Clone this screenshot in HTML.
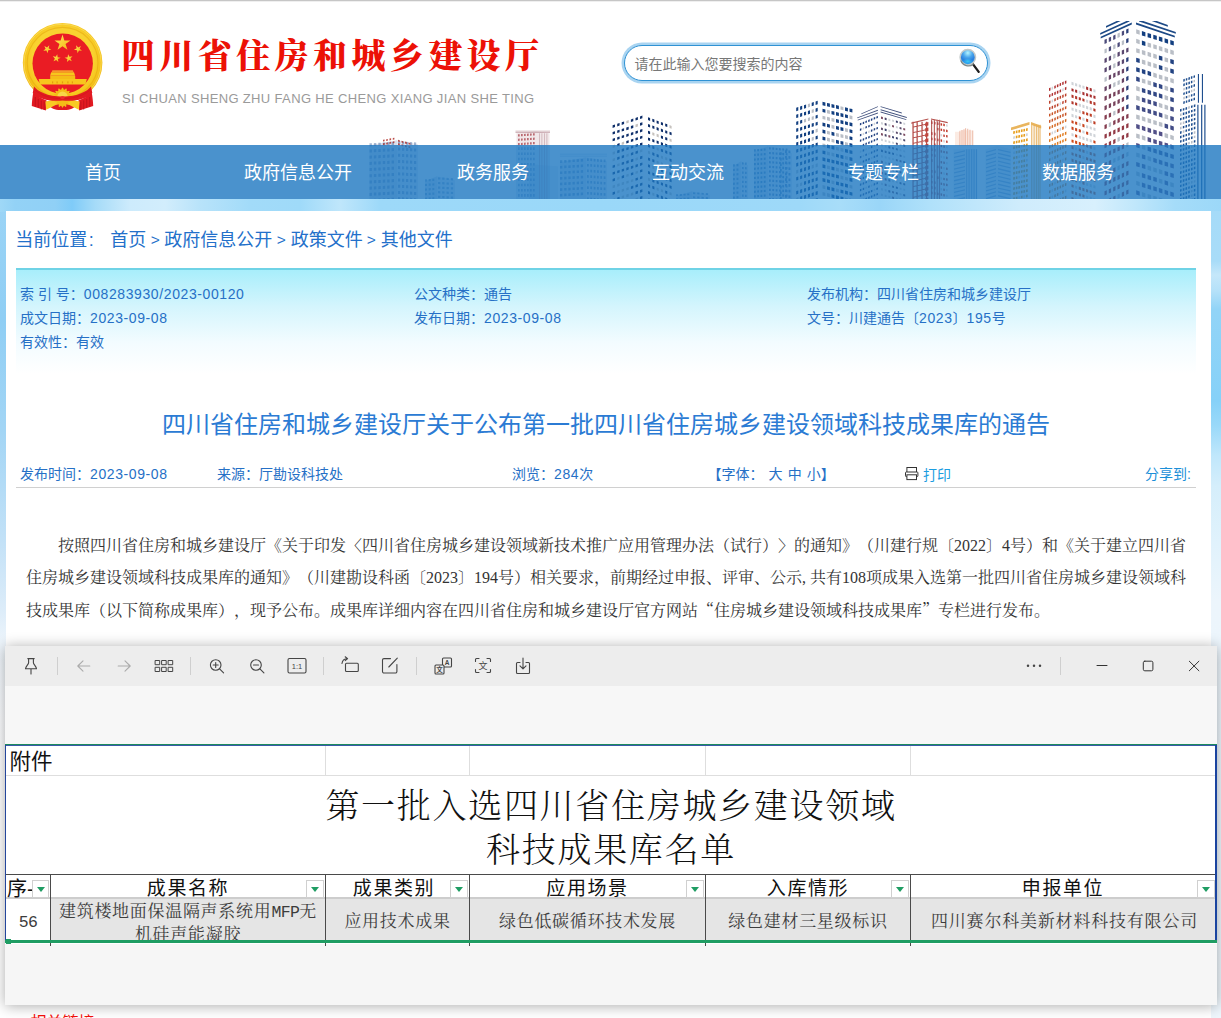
<!DOCTYPE html>
<html lang="zh-CN">
<head>
<meta charset="utf-8">
<title>四川省住房和城乡建设厅</title>
<style>
*{box-sizing:border-box;margin:0;padding:0}
html,body{width:1221px;height:1018px;overflow:hidden;background:#fff}
body{position:relative;font-family:"Liberation Sans","Noto Sans CJK SC",sans-serif;color:#333}
.abs{position:absolute}
#topline{left:0;top:0;width:1221px;height:2px;background:linear-gradient(180deg,#c6c6c6 0,#c6c6c6 1px,#efefef 1px,#efefef 2px)}
#sky{left:0;top:199px;width:1221px;height:820px;background:linear-gradient(180deg,#9bd4f6 0,#8fcef4 120px,#a2d5f5 230px,#c2e1f7 340px,#dcecf9 410px,#eef5fb 447px,#fbfcfe 520px,#fff 600px)}
#skytop{left:0;top:199px;width:1221px;height:13px;background:linear-gradient(90deg,#9fd8f7 0,#93d2f6 15px,#90d0f6 55px,#7fcbf8 72px,#a5dbf8 95px,#cdebfc 130px,#d2edfc 165px,#b8e3fa 200px,#a2dbf9 250px,#9fdaf9 300px,#bfe6fb 340px,#9dd9f9 380px,#9ad8f9 600px,#9ed9f9 800px,#a8ddf9 840px,#9ad6f8 880px,#b0e1fa 930px,#cfecfc 1020px,#d8f0fd 1095px,#c0e7fb 1135px,#a5dcf9 1175px,#9cd8f8 1221px)}
#skyr{left:1211px;top:211px;width:10px;height:807px;background:linear-gradient(180deg,#a5dbf8 0,#a8dcf8 50px,#c5e7fa 64px,#b5e1f9 80px,#92d4f7 98px,#86d1f8 190px,#9ad9f9 215px,#c0e7fb 245px,#d5eefb 275px,#e0f2fc 330px,#ecf5fc 390px,#eef6fc 807px)}
#nav{left:0;top:145px;width:1221px;height:54px;background:rgba(29,119,193,.8)}
#nav span{position:absolute;top:0;height:54px;line-height:56px;color:#fff;font-size:18px;white-space:nowrap;}
#main{left:6px;top:211px;width:1205px;height:820px;background:#fff}
#title1{left:121px;top:32.5px;font-family:"Liberation Serif","Noto Serif CJK SC",serif;font-weight:900;font-size:34px;color:#ec1106;letter-spacing:4.4px;white-space:nowrap;line-height:48px}
#title2{left:122px;top:90.3px;font-size:13px;color:#9a9a9a;white-space:nowrap;line-height:18px;letter-spacing:0.35px}
#search{left:624px;top:45px;width:364px;height:36px;border:1px solid #2f92d4;border-radius:18px;background:#fff;box-shadow:0 0 0 2.5px #a9d4f1}
#search span{position:absolute;left:9.5px;top:1px;line-height:35px;font-size:14px;color:#777}
#crumb{left:15.2px;top:225.5px;font-size:18px;line-height:28px;color:#2370ca;white-space:nowrap}
#crumb span{position:absolute;top:0}
#info{left:16px;top:268px;width:1180px;height:106px;background:linear-gradient(180deg,#a8eefb 0%,#d4f5fd 35%,#f3fcff 70%,#ffffff 100%);border-top:2px solid #6fd3e6}
.meta{font-size:14px;line-height:20px;color:#2670c6;white-space:nowrap}
.mo{font-weight:inherit;font-family:"Liberation Mono",monospace;letter-spacing:-.6px;font-size:16.5px}
.q{font-weight:inherit;font-family:"Noto Serif CJK SC",serif}
.meta i{font-style:normal;letter-spacing:.6px}
#h1{left:6px;top:407px;width:1200px;text-align:center;font-size:24px;line-height:36px;color:#2b7bd4;white-space:nowrap;}
#hr{left:16px;top:487px;width:1180px;height:1px;background:#d0d0d0}
.p{text-spacing-trim:space-all;font-family:"Liberation Serif","Noto Serif CJK SC",serif;font-size:16px;line-height:32px;color:#333;white-space:nowrap}
#win{left:5px;top:645.5px;width:1212px;height:359px;background:#f6f6f6;box-shadow:0 1px 13px rgba(0,0,0,.33)}
#tb{left:0;top:.5px;width:1212px;height:41.5px;background:#ededed}
#tb2{left:0;top:41px;width:1212px;height:59px;background:#f7f7f7}
#sheet{left:0;top:99px;width:1212px;height:200px;background:#fff}
#grayrow{left:46px;top:254px;width:1165px;height:42px;background:#e5e5e5}
#bot{left:30.5px;top:1013px;font-size:16px;color:#f5100a;line-height:20px;white-space:nowrap}

#win .i{position:absolute;overflow:visible}
#win svg{position:absolute;overflow:visible}
.sep{position:absolute;top:12px;width:1px;height:18px;background:#cfcfcf}
.gl{position:absolute;background:#dedede}
.dl{position:absolute;background:#4a4a4a}
.hd{position:absolute;top:233px;height:22px;line-height:22px;font-family:"Liberation Sans","Noto Sans CJK SC",sans-serif;font-weight:400;font-size:19px;letter-spacing:1.6px;color:#111;text-align:center;white-space:nowrap}
.dt{position:absolute;font-family:"Liberation Serif","Noto Serif CJK SC",serif;font-size:17px;letter-spacing:.7px;color:#3c3c3c;text-align:center;white-space:nowrap;line-height:22px}
.fb{position:absolute;top:235px;width:18px;height:18px;background:#fff;border:1px solid #d0d0d0}
.fb:after{content:"";position:absolute;left:4px;top:6px;border-left:4.5px solid transparent;border-right:4.5px solid transparent;border-top:5px solid #1f9d63}
.big{position:absolute;left:0;width:1212px;text-align:center;font-family:"Liberation Serif","Noto Serif CJK SC",serif;font-weight:300;font-size:34px;letter-spacing:1.7px;color:#111;white-space:nowrap;line-height:44px}
</style>
</head>
<body>
<div class="abs" id="topline"></div>
<div class="abs" id="sky"></div>
<div class="abs" id="skytop"></div>
<div class="abs" id="skyr"></div>
<!--EMB-START-->
<svg class="abs" id="emblem" style="left:0;top:0" width="125" height="125" viewBox="0 0 125 125">
<defs>
<radialGradient id="gg" cx="50%" cy="45%" r="55%"><stop offset="0.70" stop-color="#f9d230"/><stop offset="0.86" stop-color="#f6c51c"/><stop offset="1" stop-color="#eeb313"/></radialGradient>
<linearGradient id="sg" x1="0" y1="0" x2="1" y2="1"><stop offset="0" stop-color="#ffe75a"/><stop offset="1" stop-color="#f3b714"/></linearGradient>
<clipPath id="ct"><rect x="40" y="80" width="45" height="16.800"/></clipPath>
<clipPath id="cb"><rect x="40" y="100" width="45" height="12"/></clipPath>
</defs>
<circle cx="62.6" cy="62.8" r="39.8" fill="url(#gg)"/>
<circle cx="62.6" cy="62.8" r="35.4" fill="none" stroke="#e3a50f" stroke-width="1.1" opacity=".55"/>
<circle cx="62.6" cy="62.8" r="38.6" fill="none" stroke="#fbe06a" stroke-width="1" opacity=".7"/>
<circle cx="62.7" cy="63.6" r="30.2" fill="#ea1c24"/>
<g fill="url(#sg)">
<polygon points="62.50,34.60 64.39,40.40 70.49,40.40 65.55,43.99 67.44,49.80 62.50,46.21 57.56,49.80 59.45,43.99 54.51,40.40 60.61,40.40"/>
<polygon points="49.30,45.36 48.67,48.35 51.31,49.87 48.27,50.19 47.64,53.18 46.40,50.39 43.36,50.71 45.63,48.67 44.39,45.88 47.03,47.40"/>
<polygon points="76.00,45.36 78.27,47.40 80.91,45.88 79.67,48.67 81.94,50.71 78.90,50.39 77.66,53.18 77.03,50.19 73.99,49.87 76.63,48.35"/>
<polygon points="57.23,54.16 57.65,57.19 60.66,57.72 57.92,59.05 58.34,62.07 56.22,59.88 53.48,61.22 54.91,58.52 52.79,56.33 55.80,56.86"/>
<polygon points="68.07,54.16 69.50,56.86 72.51,56.33 70.39,58.52 71.82,61.22 69.08,59.88 66.96,62.07 67.38,59.05 64.64,57.72 67.65,57.19"/>
</g>
<g fill="#f7c61d">
<path d="M52.4 70.2h20.4l.7 1.8h-21.8z" fill="#f59a2a"/>
<path d="M51.2 72.2h22.8l1.2 3.6h-25.2z"/>
<path d="M50.2 76.0h25v3.4h-25z" fill="#f4bd17"/>
<path d="M38.6 79.0h48.2l-1.400 5.600h-45.400z"/>
</g>
<g fill="#e49a10"><rect x="52" y="81.4" width="1.2" height="2"/><rect x="56.5" y="81.4" width="1.2" height="2"/><rect x="61.9" y="81.4" width="1.2" height="2"/><rect x="67.3" y="81.4" width="1.2" height="2"/><rect x="71.8" y="81.4" width="1.2" height="2"/></g>
<!-- gear top half -->
<g fill="#f4bd17" clip-path="url(#ct)"><polygon points="62.00,87.71 63.00,87.71 63.71,89.50 64.49,89.68 65.91,88.38 66.81,88.81 66.67,90.73 67.30,91.23 69.14,90.67 69.76,91.45 68.80,93.12 69.15,93.84 71.05,94.14 71.27,95.11 69.69,96.20 69.69,97.00 71.27,98.09 71.05,99.06 69.15,99.36 68.80,100.08 69.76,101.75 69.14,102.53 67.30,101.97 66.67,102.47 66.81,104.39 65.91,104.82 64.49,103.52 63.71,103.70 63.00,105.49 62.00,105.49 61.29,103.70 60.51,103.52 59.09,104.82 58.19,104.39 58.33,102.47 57.70,101.97 55.86,102.53 55.24,101.75 56.20,100.08 55.85,99.36 53.95,99.06 53.73,98.09 55.31,97.00 55.31,96.20 53.73,95.11 53.95,94.14 55.85,93.84 56.20,93.12 55.24,91.45 55.86,90.67 57.70,91.23 58.33,90.73 58.19,88.81 59.09,88.38 60.51,89.68 61.29,89.50"/></g>
<path d="M57.300 96.800a5.200 5.200 0 0 1 10.400 0z" fill="#f9d648"/>
<!-- hanging drapes -->
<path d="M33.4 92 C32.400 97 31.900 102 31.800 106.000 L45.900 110.500 L46.600 100.500 C42 99 37 96 33.400 92z" fill="#e21a22"/>
<path d="M91.600 92 C92.600 97 93.100 102 93.200 106.000 L79.100 110.500 L78.400 100.500 C83 99 88 96 91.600 92z" fill="#e21a22"/>
<g stroke="#bd1219" stroke-width=".8" fill="none"><path d="M35.300 97v9.800M38.300 99v8.800M41.300 100.500v9M44.200 101.500v8.500M89.700 97v9.800M86.700 99v8.800M83.700 100.500v9M80.800 101.500v8.500"/></g>
<!-- bottom red scallop -->
<path d="M48.500 105 C51 108.500 56 110.600 62.500 110.000 C69 110.600 74 108.500 76.500 105 L70 102 L55 102z" fill="#e21a22"/>
<!-- gold ribbon tails -->
<path d="M55.000 99.800 L45.400 101.500 L46.200 109.700 L58.600 103.400z" fill="#f9ca24"/>
<path d="M70.000 99.800 L79.600 101.500 L78.800 109.700 L66.400 103.400z" fill="#f9ca24"/>
<!-- gear bottom half -->
<g fill="#f4bd17" clip-path="url(#cb)"><polygon points="62.05,91.61 62.95,91.61 63.57,93.29 64.27,93.45 65.56,92.21 66.37,92.60 66.20,94.38 66.76,94.83 68.47,94.27 69.02,94.97 68.10,96.50 68.41,97.15 70.19,97.39 70.39,98.26 68.89,99.24 68.89,99.96 70.39,100.94 70.19,101.81 68.41,102.05 68.10,102.70 69.02,104.23 68.47,104.93 66.76,104.37 66.20,104.82 66.37,106.60 65.56,106.99 64.27,105.75 63.57,105.91 62.95,107.59 62.05,107.59 61.43,105.91 60.73,105.75 59.44,106.99 58.63,106.60 58.80,104.82 58.24,104.37 56.53,104.93 55.98,104.23 56.90,102.70 56.59,102.05 54.81,101.81 54.61,100.94 56.11,99.96 56.11,99.24 54.61,98.26 54.81,97.39 56.59,97.15 56.90,96.50 55.98,94.97 56.53,94.27 58.24,94.83 58.80,94.38 58.63,92.60 59.44,92.21 60.73,93.45 61.43,93.29"/></g>
<!-- red band -->
<path d="M34.000 86.600 C38 91.500 47 96.600 62.500 96.700 C78 96.600 87 91.500 91.000 86.600 L92.300 93.000 C86 99 76 101.800 62.500 100.600 C49 101.800 39 99 32.700 93.000z" fill="#e21a22"/>
<path d="M34.5 89.500 C40 95 50 98.800 62.500 98.600 C75 98.800 85 95 90.500 89.500" stroke="#c9141c" stroke-width=".7" fill="none" opacity=".7"/>
<ellipse cx="62.500" cy="97.600" rx="2.400" ry="1.700" fill="#ee2a2e"/>
</svg>
<!--EMB-END-->
<div class="abs" id="title1">四川省住房和城乡建设厅</div>
<div class="abs" id="title2">SI CHUAN SHENG ZHU FANG HE CHENG XIANG JIAN SHE TING</div>
<div class="abs" id="search"><span>请在此输入您要搜索的内容</span></div>
<svg class="abs" id="sicon" style="left:955px;top:45px" width="30" height="32" viewBox="955 45 30 32">
<defs><radialGradient id="lens" cx="50%" cy="22%" r="75%"><stop offset="0" stop-color="#b4f5ff"/><stop offset=".4" stop-color="#4aa6ec"/><stop offset=".7" stop-color="#2a7fde"/><stop offset="1" stop-color="#2a9ff0"/></radialGradient>
<radialGradient id="lens2" cx="50%" cy="50%" r="50%"><stop offset="0" stop-color="#38d0fa" stop-opacity=".95"/><stop offset="1" stop-color="#38d0fa" stop-opacity="0"/></radialGradient></defs>
<path d="M972.400 63.400l6.300 8.500" stroke="#1e1e1e" stroke-width="2.300" stroke-linecap="round"/>
<circle cx="967.800" cy="57.200" r="7.700" fill="url(#lens)" stroke="#c3c9c9" stroke-width="1.500"/>
<path d="M960.900 60.500a7.700 7.700 0 0 0 12.500 3.400" fill="none" stroke="#7d8888" stroke-width="1.300"/>
<ellipse cx="967.800" cy="61.300" rx="5" ry="2.800" fill="url(#lens2)"/>
</svg>
<!--SKYLINE-START-->
<svg class="abs" id="skyline" width="1221" height="178.3" viewBox="0 20.7 1221 178.3" style="left:0;top:20.7px">
<path fill="#4b4b7a" d="M1104.5 39.5l2.3 -1.1v4.3l-2.3 1.1zM1108.8 37.5l2.3 -1.1v4.3l-2.3 1.1zM1113.2 35.4l2.3 -1.1v4.3l-2.3 1.1zM1121.8 31.3l2.3 -1.1v4.3l-2.3 1.1zM1108.8 46.9l2.3 -1.1v4.3l-2.3 1.1zM1117.5 42.8l2.3 -1.1v4.3l-2.3 1.1z"/>
<path fill="#b9bec6" d="M1117.5 33.4l2.3 -1.1v4.3l-2.3 1.1zM1104.5 49.0l2.3 -1.1v4.3l-2.3 1.1zM1113.2 44.9l2.3 -1.1v4.3l-2.3 1.1zM1121.8 40.8l2.3 -1.1v4.3l-2.3 1.1zM1113.2 54.3l2.3 -1.1v4.3l-2.3 1.1zM1113.2 63.8l2.3 -1.1v4.3l-2.3 1.1zM1104.5 77.4l2.3 -1.1v4.3l-2.3 1.1zM1113.2 82.8l2.3 -1.1v4.3l-2.3 1.1zM1117.5 80.7l2.3 -1.1v4.3l-2.3 1.1zM1113.2 111.2l2.3 -1.1v4.3l-2.3 1.1zM1108.8 122.7l2.3 -1.1v4.3l-2.3 1.1zM1117.5 137.5l2.3 -1.1v4.3l-2.3 1.1zM1126.2 142.9l2.3 -1.1v4.3l-2.3 1.1zM1113.2 158.5l2.3 -1.1v4.3l-2.3 1.1zM1117.5 156.5l2.3 -1.1v4.3l-2.3 1.1zM1126.2 152.4l2.3 -1.1v4.3l-2.3 1.1zM1117.5 165.9l2.3 -1.1v4.3l-2.3 1.1zM1117.5 194.3l2.3 -1.1v4.3l-2.3 1.1zM1136.2 29.0l3.5 1.1v4.3l-3.5 -1.1zM1136.2 38.5l3.5 1.1v4.3l-3.5 -1.1zM1147.6 42.1l3.5 1.1v4.3l-3.5 -1.1zM1153.3 43.9l3.5 1.1v4.3l-3.5 -1.1zM1158.9 45.7l3.5 1.1v4.3l-3.5 -1.1zM1164.6 47.5l3.5 1.1v4.3l-3.5 -1.1zM1170.3 49.3l3.5 1.1v4.3l-3.5 -1.1zM1136.2 47.9l3.5 1.1v4.3l-3.5 -1.1zM1141.9 49.7l3.5 1.1v4.3l-3.5 -1.1zM1147.6 51.5l3.5 1.1v4.3l-3.5 -1.1zM1153.3 53.3l3.5 1.1v4.3l-3.5 -1.1zM1164.6 56.9l3.5 1.1v4.3l-3.5 -1.1zM1141.9 59.2l3.5 1.1v4.3l-3.5 -1.1zM1147.6 61.0l3.5 1.1v4.3l-3.5 -1.1zM1153.3 62.8l3.5 1.1v4.3l-3.5 -1.1zM1164.6 66.4l3.5 1.1v4.3l-3.5 -1.1zM1153.3 72.3l3.5 1.1v4.3l-3.5 -1.1zM1158.9 74.1l3.5 1.1v4.3l-3.5 -1.1zM1164.6 75.9l3.5 1.1v4.3l-3.5 -1.1zM1170.3 77.7l3.5 1.1v4.3l-3.5 -1.1zM1141.9 78.1l3.5 1.1v4.3l-3.5 -1.1zM1147.6 79.9l3.5 1.1v4.3l-3.5 -1.1zM1164.6 85.3l3.5 1.1v4.3l-3.5 -1.1zM1136.2 85.8l3.5 1.1v4.3l-3.5 -1.1zM1164.6 94.8l3.5 1.1v4.3l-3.5 -1.1zM1136.2 95.3l3.5 1.1v4.3l-3.5 -1.1zM1158.9 102.5l3.5 1.1v4.3l-3.5 -1.1zM1164.6 104.3l3.5 1.1v4.3l-3.5 -1.1zM1164.6 113.8l3.5 1.1v4.3l-3.5 -1.1zM1136.2 114.2l3.5 1.1v4.3l-3.5 -1.1zM1141.9 116.0l3.5 1.1v4.3l-3.5 -1.1zM1147.6 117.8l3.5 1.1v4.3l-3.5 -1.1zM1153.3 119.6l3.5 1.1v4.3l-3.5 -1.1zM1158.9 121.4l3.5 1.1v4.3l-3.5 -1.1zM1164.6 132.7l3.5 1.1v4.3l-3.5 -1.1zM1170.3 134.5l3.5 1.1v4.3l-3.5 -1.1zM1136.2 133.2l3.5 1.1v4.3l-3.5 -1.1zM1141.9 135.0l3.5 1.1v4.3l-3.5 -1.1zM1141.9 144.4l3.5 1.1v4.3l-3.5 -1.1zM1136.2 152.1l3.5 1.1v4.3l-3.5 -1.1zM1147.6 155.7l3.5 1.1v4.3l-3.5 -1.1zM1147.6 165.2l3.5 1.1v4.3l-3.5 -1.1zM1153.3 167.0l3.5 1.1v4.3l-3.5 -1.1zM1158.9 168.8l3.5 1.1v4.3l-3.5 -1.1zM1136.2 171.0l3.5 1.1v4.3l-3.5 -1.1zM1158.9 178.2l3.5 1.1v4.3l-3.5 -1.1zM1170.3 181.8l3.5 1.1v4.3l-3.5 -1.1zM1136.2 180.5l3.5 1.1v4.3l-3.5 -1.1zM1141.9 191.8l3.5 1.1v4.3l-3.5 -1.1zM1147.6 193.6l3.5 1.1v4.3l-3.5 -1.1zM1153.3 195.4l3.5 1.1v4.3l-3.5 -1.1zM1158.9 197.2l3.5 1.1v4.3l-3.5 -1.1zM1170.3 200.8l3.5 1.1v4.3l-3.5 -1.1zM1193.5 79.9l1.5 -0.5v2.4l-1.5 0.5zM1183.3 87.9l1.5 -0.5v2.4l-1.5 0.5zM1190.9 89.7l1.5 -0.5v2.4l-1.5 0.5zM1193.5 88.8l1.5 -0.5v2.4l-1.5 0.5zM1183.3 96.8l1.5 -0.5v2.4l-1.5 0.5zM1188.4 95.0l1.5 -0.5v2.4l-1.5 0.5zM1188.2 106.3l1.6 -0.5v2.4l-1.6 0.5zM1180.0 113.5l1.6 -0.5v2.4l-1.6 0.5zM1180.0 122.4l1.6 -0.5v2.4l-1.6 0.5zM1182.8 121.5l1.6 -0.5v2.4l-1.6 0.5zM1180.0 126.8l1.6 -0.5v2.4l-1.6 0.5zM1182.8 130.3l1.6 -0.5v2.4l-1.6 0.5zM1193.8 131.2l1.6 -0.5v2.4l-1.6 0.5zM1193.8 135.6l1.6 -0.5v2.4l-1.6 0.5zM1188.2 141.9l1.6 -0.5v2.4l-1.6 0.5zM1191.0 141.0l1.6 -0.5v2.4l-1.6 0.5zM1191.0 145.4l1.6 -0.5v2.4l-1.6 0.5zM1191.0 154.3l1.6 -0.5v2.4l-1.6 0.5zM1180.0 166.8l1.6 -0.5v2.4l-1.6 0.5zM1193.8 175.7l1.6 -0.5v2.4l-1.6 0.5zM1188.2 181.9l1.6 -0.5v2.4l-1.6 0.5zM1191.0 181.0l1.6 -0.5v2.4l-1.6 0.5zM1193.8 180.1l1.6 -0.5v2.4l-1.6 0.5zM1191.0 189.9l1.6 -0.5v2.4l-1.6 0.5zM1191.0 194.4l1.6 -0.5v2.4l-1.6 0.5zM1185.5 200.6l1.6 -0.5v2.4l-1.6 0.5zM807.9 103.8l2.1 -0.7v3.4l-2.1 0.7zM811.7 109.4l2.1 -0.7v3.4l-2.1 0.7zM804.0 118.9l2.1 -0.7v3.4l-2.1 0.7zM807.9 117.6l2.1 -0.7v3.4l-2.1 0.7zM811.7 116.4l2.1 -0.7v3.4l-2.1 0.7zM815.6 129.0l2.1 -0.7v3.4l-2.1 0.7zM811.7 137.2l2.1 -0.7v3.4l-2.1 0.7zM796.2 170.0l2.1 -0.7v3.4l-2.1 0.7zM811.7 165.0l2.1 -0.7v3.4l-2.1 0.7zM815.6 163.7l2.1 -0.7v3.4l-2.1 0.7zM796.2 183.8l2.1 -0.7v3.4l-2.1 0.7zM800.1 182.6l2.1 -0.7v3.4l-2.1 0.7zM796.2 197.7l2.1 -0.7v3.4l-2.1 0.7zM840.5 105.9l2.9 0.7v3.4l-2.9 -0.7zM827.0 109.5l2.9 0.7v3.4l-2.9 -0.7zM849.5 115.0l2.9 0.7v3.4l-2.9 -0.7zM822.5 115.4l2.9 0.7v3.4l-2.9 -0.7zM827.0 116.5l2.9 0.7v3.4l-2.9 -0.7zM831.5 117.6l2.9 0.7v3.4l-2.9 -0.7zM831.5 124.5l2.9 0.7v3.4l-2.9 -0.7zM845.0 127.8l2.9 0.7v3.4l-2.9 -0.7zM827.0 130.4l2.9 0.7v3.4l-2.9 -0.7zM836.0 132.6l2.9 0.7v3.4l-2.9 -0.7zM840.5 133.7l2.9 0.7v3.4l-2.9 -0.7zM845.0 134.8l2.9 0.7v3.4l-2.9 -0.7zM827.0 137.3l2.9 0.7v3.4l-2.9 -0.7zM831.5 138.4l2.9 0.7v3.4l-2.9 -0.7zM845.0 141.7l2.9 0.7v3.4l-2.9 -0.7zM822.5 143.1l2.9 0.7v3.4l-2.9 -0.7zM836.0 146.4l2.9 0.7v3.4l-2.9 -0.7zM840.5 147.5l2.9 0.7v3.4l-2.9 -0.7zM827.0 151.2l2.9 0.7v3.4l-2.9 -0.7zM831.5 152.3l2.9 0.7v3.4l-2.9 -0.7zM845.0 155.6l2.9 0.7v3.4l-2.9 -0.7zM827.0 165.1l2.9 0.7v3.4l-2.9 -0.7zM836.0 167.3l2.9 0.7v3.4l-2.9 -0.7zM840.5 168.4l2.9 0.7v3.4l-2.9 -0.7zM840.5 175.3l2.9 0.7v3.4l-2.9 -0.7zM845.0 176.4l2.9 0.7v3.4l-2.9 -0.7zM831.5 180.0l2.9 0.7v3.4l-2.9 -0.7zM849.5 184.4l2.9 0.7v3.4l-2.9 -0.7zM822.5 184.8l2.9 0.7v3.4l-2.9 -0.7zM836.0 188.1l2.9 0.7v3.4l-2.9 -0.7zM822.5 191.7l2.9 0.7v3.4l-2.9 -0.7zM827.0 192.8l2.9 0.7v3.4l-2.9 -0.7zM845.0 197.2l2.9 0.7v3.4l-2.9 -0.7zM840.5 203.1l2.9 0.7v3.4l-2.9 -0.7zM849.5 205.3l2.9 0.7v3.4l-2.9 -0.7z"/>
<path fill="#2a3f7a" d="M1126.2 29.2l2.3 -1.1v4.3l-2.3 1.1zM1126.2 38.7l2.3 -1.1v4.3l-2.3 1.1zM1126.2 57.7l2.3 -1.1v4.3l-2.3 1.1zM1126.2 67.1l2.3 -1.1v4.3l-2.3 1.1zM1126.2 76.6l2.3 -1.1v4.3l-2.3 1.1zM1126.2 86.1l2.3 -1.1v4.3l-2.3 1.1zM1126.2 95.5l2.3 -1.1v4.3l-2.3 1.1zM1126.2 105.0l2.3 -1.1v4.3l-2.3 1.1z"/>
<path fill="#59476f" d="M1104.5 58.4l2.3 -1.1v4.3l-2.3 1.1zM1108.8 56.4l2.3 -1.1v4.3l-2.3 1.1zM1117.5 52.3l2.3 -1.1v4.3l-2.3 1.1zM1121.8 50.2l2.3 -1.1v4.3l-2.3 1.1zM1126.2 48.2l2.3 -1.1v4.3l-2.3 1.1zM1104.5 67.9l2.3 -1.1v4.3l-2.3 1.1zM1108.8 65.9l2.3 -1.1v4.3l-2.3 1.1zM1117.5 61.8l2.3 -1.1v4.3l-2.3 1.1zM1121.8 59.7l2.3 -1.1v4.3l-2.3 1.1z"/>
<path fill="#674465" d="M1108.8 75.3l2.3 -1.1v4.3l-2.3 1.1zM1113.2 73.3l2.3 -1.1v4.3l-2.3 1.1zM1117.5 71.2l2.3 -1.1v4.3l-2.3 1.1zM1121.8 69.2l2.3 -1.1v4.3l-2.3 1.1zM1104.5 86.8l2.3 -1.1v4.3l-2.3 1.1zM1108.8 84.8l2.3 -1.1v4.3l-2.3 1.1zM1121.8 78.6l2.3 -1.1v4.3l-2.3 1.1z"/>
<path fill="#76405a" d="M1104.5 96.3l2.3 -1.1v4.3l-2.3 1.1zM1108.8 94.3l2.3 -1.1v4.3l-2.3 1.1zM1113.2 92.2l2.3 -1.1v4.3l-2.3 1.1zM1117.5 90.2l2.3 -1.1v4.3l-2.3 1.1zM1121.8 88.1l2.3 -1.1v4.3l-2.3 1.1zM1104.5 105.8l2.3 -1.1v4.3l-2.3 1.1zM1108.8 103.7l2.3 -1.1v4.3l-2.3 1.1zM1113.2 101.7l2.3 -1.1v4.3l-2.3 1.1zM1117.5 99.6l2.3 -1.1v4.3l-2.3 1.1zM1121.8 97.6l2.3 -1.1v4.3l-2.3 1.1z"/>
<path fill="#843c4f" d="M1104.5 115.3l2.3 -1.1v4.3l-2.3 1.1zM1108.8 113.2l2.3 -1.1v4.3l-2.3 1.1zM1117.5 109.1l2.3 -1.1v4.3l-2.3 1.1zM1121.8 107.1l2.3 -1.1v4.3l-2.3 1.1zM1104.5 124.7l2.3 -1.1v4.3l-2.3 1.1zM1113.2 120.6l2.3 -1.1v4.3l-2.3 1.1zM1117.5 118.6l2.3 -1.1v4.3l-2.3 1.1zM1121.8 116.5l2.3 -1.1v4.3l-2.3 1.1zM1126.2 114.5l2.3 -1.1v4.3l-2.3 1.1z"/>
<path fill="#923945" d="M1104.5 134.2l2.3 -1.1v4.3l-2.3 1.1zM1108.8 132.1l2.3 -1.1v4.3l-2.3 1.1zM1113.2 130.1l2.3 -1.1v4.3l-2.3 1.1zM1117.5 128.0l2.3 -1.1v4.3l-2.3 1.1zM1121.8 126.0l2.3 -1.1v4.3l-2.3 1.1zM1126.2 123.9l2.3 -1.1v4.3l-2.3 1.1zM1104.5 143.7l2.3 -1.1v4.3l-2.3 1.1zM1108.8 141.6l2.3 -1.1v4.3l-2.3 1.1zM1113.2 139.6l2.3 -1.1v4.3l-2.3 1.1zM1121.8 135.5l2.3 -1.1v4.3l-2.3 1.1zM1126.2 133.4l2.3 -1.1v4.3l-2.3 1.1z"/>
<path fill="#a0353a" d="M1104.5 153.1l2.3 -1.1v4.3l-2.3 1.1zM1108.8 151.1l2.3 -1.1v4.3l-2.3 1.1zM1113.2 149.0l2.3 -1.1v4.3l-2.3 1.1zM1117.5 147.0l2.3 -1.1v4.3l-2.3 1.1zM1121.8 144.9l2.3 -1.1v4.3l-2.3 1.1zM1104.5 162.6l2.3 -1.1v4.3l-2.3 1.1zM1108.8 160.6l2.3 -1.1v4.3l-2.3 1.1zM1121.8 154.4l2.3 -1.1v4.3l-2.3 1.1zM1104.5 172.1l2.3 -1.1v4.3l-2.3 1.1zM1108.8 170.0l2.3 -1.1v4.3l-2.3 1.1zM1113.2 168.0l2.3 -1.1v4.3l-2.3 1.1zM1121.8 163.9l2.3 -1.1v4.3l-2.3 1.1zM1126.2 161.8l2.3 -1.1v4.3l-2.3 1.1zM1104.5 181.5l2.3 -1.1v4.3l-2.3 1.1zM1108.8 179.5l2.3 -1.1v4.3l-2.3 1.1zM1113.2 177.4l2.3 -1.1v4.3l-2.3 1.1zM1117.5 175.4l2.3 -1.1v4.3l-2.3 1.1zM1121.8 173.3l2.3 -1.1v4.3l-2.3 1.1zM1126.2 171.3l2.3 -1.1v4.3l-2.3 1.1zM1104.5 191.0l2.3 -1.1v4.3l-2.3 1.1zM1108.8 189.0l2.3 -1.1v4.3l-2.3 1.1zM1113.2 186.9l2.3 -1.1v4.3l-2.3 1.1zM1117.5 184.9l2.3 -1.1v4.3l-2.3 1.1zM1121.8 182.8l2.3 -1.1v4.3l-2.3 1.1zM1126.2 180.8l2.3 -1.1v4.3l-2.3 1.1zM1104.5 200.5l2.3 -1.1v4.3l-2.3 1.1zM1108.8 198.4l2.3 -1.1v4.3l-2.3 1.1zM1113.2 196.4l2.3 -1.1v4.3l-2.3 1.1zM1121.8 192.3l2.3 -1.1v4.3l-2.3 1.1zM1126.2 190.2l2.3 -1.1v4.3l-2.3 1.1zM1104.5 210.0l2.3 -1.1v4.3l-2.3 1.1zM1108.8 207.9l2.3 -1.1v4.3l-2.3 1.1zM1113.2 205.9l2.3 -1.1v4.3l-2.3 1.1zM1117.5 203.8l2.3 -1.1v4.3l-2.3 1.1zM1121.8 201.8l2.3 -1.1v4.3l-2.3 1.1zM1126.2 199.7l2.3 -1.1v4.3l-2.3 1.1z"/>
<path fill="#123f80" d="M1141.9 30.8l3.5 1.1v4.3l-3.5 -1.1zM1147.6 32.6l3.5 1.1v4.3l-3.5 -1.1zM1153.3 34.4l3.5 1.1v4.3l-3.5 -1.1zM1158.9 36.2l3.5 1.1v4.3l-3.5 -1.1zM1164.6 38.0l3.5 1.1v4.3l-3.5 -1.1zM1170.3 39.8l3.5 1.1v4.3l-3.5 -1.1zM1141.9 40.3l3.5 1.1v4.3l-3.5 -1.1zM796.2 107.5l2.1 -0.7v3.4l-2.1 0.7zM800.1 106.2l2.1 -0.7v3.4l-2.1 0.7zM804.0 105.0l2.1 -0.7v3.4l-2.1 0.7zM811.7 102.5l2.1 -0.7v3.4l-2.1 0.7zM815.6 101.2l2.1 -0.7v3.4l-2.1 0.7zM796.2 114.4l2.1 -0.7v3.4l-2.1 0.7zM800.1 113.2l2.1 -0.7v3.4l-2.1 0.7zM804.0 111.9l2.1 -0.7v3.4l-2.1 0.7zM807.9 110.7l2.1 -0.7v3.4l-2.1 0.7zM815.6 108.2l2.1 -0.7v3.4l-2.1 0.7zM796.2 121.4l2.1 -0.7v3.4l-2.1 0.7zM800.1 120.1l2.1 -0.7v3.4l-2.1 0.7zM815.6 115.1l2.1 -0.7v3.4l-2.1 0.7zM796.2 128.3l2.1 -0.7v3.4l-2.1 0.7zM800.1 127.1l2.1 -0.7v3.4l-2.1 0.7zM804.0 125.8l2.1 -0.7v3.4l-2.1 0.7zM807.9 124.6l2.1 -0.7v3.4l-2.1 0.7zM811.7 123.3l2.1 -0.7v3.4l-2.1 0.7zM815.6 122.1l2.1 -0.7v3.4l-2.1 0.7zM796.2 135.3l2.1 -0.7v3.4l-2.1 0.7zM800.1 134.0l2.1 -0.7v3.4l-2.1 0.7zM804.0 132.8l2.1 -0.7v3.4l-2.1 0.7zM807.9 131.5l2.1 -0.7v3.4l-2.1 0.7zM811.7 130.3l2.1 -0.7v3.4l-2.1 0.7zM796.2 142.2l2.1 -0.7v3.4l-2.1 0.7zM800.1 140.9l2.1 -0.7v3.4l-2.1 0.7zM804.0 139.7l2.1 -0.7v3.4l-2.1 0.7zM807.9 138.4l2.1 -0.7v3.4l-2.1 0.7zM815.6 135.9l2.1 -0.7v3.4l-2.1 0.7zM796.2 149.1l2.1 -0.7v3.4l-2.1 0.7zM800.1 147.9l2.1 -0.7v3.4l-2.1 0.7zM804.0 146.6l2.1 -0.7v3.4l-2.1 0.7zM807.9 145.4l2.1 -0.7v3.4l-2.1 0.7zM811.7 144.1l2.1 -0.7v3.4l-2.1 0.7zM815.6 142.9l2.1 -0.7v3.4l-2.1 0.7zM796.2 156.1l2.1 -0.7v3.4l-2.1 0.7zM800.1 154.8l2.1 -0.7v3.4l-2.1 0.7zM804.0 153.6l2.1 -0.7v3.4l-2.1 0.7zM807.9 152.3l2.1 -0.7v3.4l-2.1 0.7zM811.7 151.1l2.1 -0.7v3.4l-2.1 0.7zM815.6 149.8l2.1 -0.7v3.4l-2.1 0.7zM796.2 163.0l2.1 -0.7v3.4l-2.1 0.7zM800.1 161.8l2.1 -0.7v3.4l-2.1 0.7zM804.0 160.5l2.1 -0.7v3.4l-2.1 0.7zM807.9 159.3l2.1 -0.7v3.4l-2.1 0.7zM811.7 158.0l2.1 -0.7v3.4l-2.1 0.7zM815.6 156.8l2.1 -0.7v3.4l-2.1 0.7zM800.1 168.7l2.1 -0.7v3.4l-2.1 0.7zM804.0 167.5l2.1 -0.7v3.4l-2.1 0.7zM807.9 166.2l2.1 -0.7v3.4l-2.1 0.7zM796.2 176.9l2.1 -0.7v3.4l-2.1 0.7zM800.1 175.6l2.1 -0.7v3.4l-2.1 0.7zM804.0 174.4l2.1 -0.7v3.4l-2.1 0.7zM807.9 173.1l2.1 -0.7v3.4l-2.1 0.7zM811.7 171.9l2.1 -0.7v3.4l-2.1 0.7zM815.6 170.6l2.1 -0.7v3.4l-2.1 0.7zM804.0 181.3l2.1 -0.7v3.4l-2.1 0.7zM807.9 180.1l2.1 -0.7v3.4l-2.1 0.7zM811.7 178.8l2.1 -0.7v3.4l-2.1 0.7zM815.6 177.6l2.1 -0.7v3.4l-2.1 0.7zM796.2 190.8l2.1 -0.7v3.4l-2.1 0.7zM800.1 189.5l2.1 -0.7v3.4l-2.1 0.7zM804.0 188.3l2.1 -0.7v3.4l-2.1 0.7zM807.9 187.0l2.1 -0.7v3.4l-2.1 0.7zM811.7 185.8l2.1 -0.7v3.4l-2.1 0.7zM815.6 184.5l2.1 -0.7v3.4l-2.1 0.7zM800.1 196.5l2.1 -0.7v3.4l-2.1 0.7zM804.0 195.2l2.1 -0.7v3.4l-2.1 0.7zM807.9 194.0l2.1 -0.7v3.4l-2.1 0.7zM811.7 192.7l2.1 -0.7v3.4l-2.1 0.7zM815.6 191.5l2.1 -0.7v3.4l-2.1 0.7zM796.2 204.7l2.1 -0.7v3.4l-2.1 0.7zM800.1 203.4l2.1 -0.7v3.4l-2.1 0.7zM804.0 202.2l2.1 -0.7v3.4l-2.1 0.7zM807.9 200.9l2.1 -0.7v3.4l-2.1 0.7zM811.7 199.7l2.1 -0.7v3.4l-2.1 0.7zM815.6 198.4l2.1 -0.7v3.4l-2.1 0.7zM822.5 101.5l2.9 0.7v3.4l-2.9 -0.7zM827.0 102.6l2.9 0.7v3.4l-2.9 -0.7zM831.5 103.7l2.9 0.7v3.4l-2.9 -0.7zM836.0 104.8l2.9 0.7v3.4l-2.9 -0.7zM845.0 107.0l2.9 0.7v3.4l-2.9 -0.7zM849.5 108.1l2.9 0.7v3.4l-2.9 -0.7zM822.5 108.4l2.9 0.7v3.4l-2.9 -0.7zM831.5 110.6l2.9 0.7v3.4l-2.9 -0.7zM836.0 111.7l2.9 0.7v3.4l-2.9 -0.7zM840.5 112.8l2.9 0.7v3.4l-2.9 -0.7zM845.0 113.9l2.9 0.7v3.4l-2.9 -0.7zM836.0 118.7l2.9 0.7v3.4l-2.9 -0.7zM840.5 119.8l2.9 0.7v3.4l-2.9 -0.7zM845.0 120.9l2.9 0.7v3.4l-2.9 -0.7zM849.5 122.0l2.9 0.7v3.4l-2.9 -0.7zM822.5 122.3l2.9 0.7v3.4l-2.9 -0.7zM827.0 123.4l2.9 0.7v3.4l-2.9 -0.7zM836.0 125.6l2.9 0.7v3.4l-2.9 -0.7zM840.5 126.7l2.9 0.7v3.4l-2.9 -0.7zM849.5 128.9l2.9 0.7v3.4l-2.9 -0.7zM822.5 129.3l2.9 0.7v3.4l-2.9 -0.7zM831.5 131.5l2.9 0.7v3.4l-2.9 -0.7zM849.5 135.9l2.9 0.7v3.4l-2.9 -0.7zM822.5 136.2l2.9 0.7v3.4l-2.9 -0.7zM836.0 139.5l2.9 0.7v3.4l-2.9 -0.7zM840.5 140.6l2.9 0.7v3.4l-2.9 -0.7zM849.5 142.8l2.9 0.7v3.4l-2.9 -0.7zM827.0 144.2l2.9 0.7v3.4l-2.9 -0.7zM831.5 145.3l2.9 0.7v3.4l-2.9 -0.7zM845.0 148.6l2.9 0.7v3.4l-2.9 -0.7zM849.5 149.7l2.9 0.7v3.4l-2.9 -0.7zM822.5 150.1l2.9 0.7v3.4l-2.9 -0.7zM836.0 153.4l2.9 0.7v3.4l-2.9 -0.7zM840.5 154.5l2.9 0.7v3.4l-2.9 -0.7zM849.5 156.7l2.9 0.7v3.4l-2.9 -0.7zM822.5 157.0l2.9 0.7v3.4l-2.9 -0.7zM827.0 158.1l2.9 0.7v3.4l-2.9 -0.7zM831.5 159.2l2.9 0.7v3.4l-2.9 -0.7zM836.0 160.3l2.9 0.7v3.4l-2.9 -0.7zM840.5 161.4l2.9 0.7v3.4l-2.9 -0.7zM845.0 162.5l2.9 0.7v3.4l-2.9 -0.7zM849.5 163.6l2.9 0.7v3.4l-2.9 -0.7zM822.5 164.0l2.9 0.7v3.4l-2.9 -0.7zM831.5 166.2l2.9 0.7v3.4l-2.9 -0.7zM845.0 169.5l2.9 0.7v3.4l-2.9 -0.7zM849.5 170.6l2.9 0.7v3.4l-2.9 -0.7zM822.5 170.9l2.9 0.7v3.4l-2.9 -0.7zM827.0 172.0l2.9 0.7v3.4l-2.9 -0.7zM831.5 173.1l2.9 0.7v3.4l-2.9 -0.7zM836.0 174.2l2.9 0.7v3.4l-2.9 -0.7zM849.5 177.5l2.9 0.7v3.4l-2.9 -0.7zM822.5 177.8l2.9 0.7v3.4l-2.9 -0.7zM827.0 178.9l2.9 0.7v3.4l-2.9 -0.7zM836.0 181.1l2.9 0.7v3.4l-2.9 -0.7zM840.5 182.2l2.9 0.7v3.4l-2.9 -0.7zM845.0 183.3l2.9 0.7v3.4l-2.9 -0.7zM827.0 185.9l2.9 0.7v3.4l-2.9 -0.7zM831.5 187.0l2.9 0.7v3.4l-2.9 -0.7zM840.5 189.2l2.9 0.7v3.4l-2.9 -0.7zM845.0 190.3l2.9 0.7v3.4l-2.9 -0.7zM849.5 191.4l2.9 0.7v3.4l-2.9 -0.7zM831.5 193.9l2.9 0.7v3.4l-2.9 -0.7zM836.0 195.0l2.9 0.7v3.4l-2.9 -0.7zM840.5 196.1l2.9 0.7v3.4l-2.9 -0.7zM849.5 198.3l2.9 0.7v3.4l-2.9 -0.7zM822.5 198.7l2.9 0.7v3.4l-2.9 -0.7zM827.0 199.8l2.9 0.7v3.4l-2.9 -0.7zM831.5 200.9l2.9 0.7v3.4l-2.9 -0.7zM836.0 202.0l2.9 0.7v3.4l-2.9 -0.7zM845.0 204.2l2.9 0.7v3.4l-2.9 -0.7z"/>
<path fill="#224382" d="M1158.9 55.1l3.5 1.1v4.3l-3.5 -1.1zM1170.3 58.7l3.5 1.1v4.3l-3.5 -1.1zM1136.2 57.4l3.5 1.1v4.3l-3.5 -1.1zM1158.9 64.6l3.5 1.1v4.3l-3.5 -1.1zM1170.3 68.2l3.5 1.1v4.3l-3.5 -1.1zM1136.2 66.9l3.5 1.1v4.3l-3.5 -1.1zM1141.9 68.7l3.5 1.1v4.3l-3.5 -1.1zM1147.6 70.5l3.5 1.1v4.3l-3.5 -1.1z"/>
<path fill="#324784" d="M1136.2 76.3l3.5 1.1v4.3l-3.5 -1.1zM1153.3 81.8l3.5 1.1v4.3l-3.5 -1.1zM1158.9 83.5l3.5 1.1v4.3l-3.5 -1.1zM1170.3 87.1l3.5 1.1v4.3l-3.5 -1.1zM1141.9 87.6l3.5 1.1v4.3l-3.5 -1.1zM1147.6 89.4l3.5 1.1v4.3l-3.5 -1.1zM1153.3 91.2l3.5 1.1v4.3l-3.5 -1.1zM1158.9 93.0l3.5 1.1v4.3l-3.5 -1.1zM1170.3 96.6l3.5 1.1v4.3l-3.5 -1.1z"/>
<path fill="#424c86" d="M1141.9 97.1l3.5 1.1v4.3l-3.5 -1.1zM1147.6 98.9l3.5 1.1v4.3l-3.5 -1.1zM1153.3 100.7l3.5 1.1v4.3l-3.5 -1.1zM1170.3 106.1l3.5 1.1v4.3l-3.5 -1.1zM1136.2 104.8l3.5 1.1v4.3l-3.5 -1.1zM1141.9 106.6l3.5 1.1v4.3l-3.5 -1.1zM1147.6 108.4l3.5 1.1v4.3l-3.5 -1.1zM1153.3 110.2l3.5 1.1v4.3l-3.5 -1.1zM1158.9 112.0l3.5 1.1v4.3l-3.5 -1.1zM1170.3 115.6l3.5 1.1v4.3l-3.5 -1.1zM1164.6 123.2l3.5 1.1v4.3l-3.5 -1.1zM1170.3 125.0l3.5 1.1v4.3l-3.5 -1.1z"/>
<path fill="#525088" d="M1136.2 123.7l3.5 1.1v4.3l-3.5 -1.1zM1141.9 125.5l3.5 1.1v4.3l-3.5 -1.1zM1147.6 127.3l3.5 1.1v4.3l-3.5 -1.1zM1153.3 129.1l3.5 1.1v4.3l-3.5 -1.1zM1158.9 130.9l3.5 1.1v4.3l-3.5 -1.1zM1147.6 136.8l3.5 1.1v4.3l-3.5 -1.1zM1153.3 138.6l3.5 1.1v4.3l-3.5 -1.1zM1158.9 140.4l3.5 1.1v4.3l-3.5 -1.1zM1164.6 142.2l3.5 1.1v4.3l-3.5 -1.1zM1170.3 144.0l3.5 1.1v4.3l-3.5 -1.1zM1136.2 142.6l3.5 1.1v4.3l-3.5 -1.1zM1147.6 146.2l3.5 1.1v4.3l-3.5 -1.1zM1153.3 148.0l3.5 1.1v4.3l-3.5 -1.1zM1158.9 149.8l3.5 1.1v4.3l-3.5 -1.1zM1164.6 151.6l3.5 1.1v4.3l-3.5 -1.1zM1170.3 153.4l3.5 1.1v4.3l-3.5 -1.1z"/>
<path fill="#62548a" d="M1141.9 153.9l3.5 1.1v4.3l-3.5 -1.1zM1153.3 157.5l3.5 1.1v4.3l-3.5 -1.1zM1158.9 159.3l3.5 1.1v4.3l-3.5 -1.1zM1164.6 161.1l3.5 1.1v4.3l-3.5 -1.1zM1170.3 162.9l3.5 1.1v4.3l-3.5 -1.1zM1136.2 161.6l3.5 1.1v4.3l-3.5 -1.1zM1141.9 163.4l3.5 1.1v4.3l-3.5 -1.1zM1164.6 170.6l3.5 1.1v4.3l-3.5 -1.1zM1170.3 172.4l3.5 1.1v4.3l-3.5 -1.1zM1141.9 172.8l3.5 1.1v4.3l-3.5 -1.1zM1147.6 174.6l3.5 1.1v4.3l-3.5 -1.1zM1153.3 176.4l3.5 1.1v4.3l-3.5 -1.1zM1164.6 180.0l3.5 1.1v4.3l-3.5 -1.1zM1141.9 182.3l3.5 1.1v4.3l-3.5 -1.1zM1147.6 184.1l3.5 1.1v4.3l-3.5 -1.1zM1153.3 185.9l3.5 1.1v4.3l-3.5 -1.1zM1158.9 187.7l3.5 1.1v4.3l-3.5 -1.1zM1164.6 189.5l3.5 1.1v4.3l-3.5 -1.1zM1170.3 191.3l3.5 1.1v4.3l-3.5 -1.1zM1136.2 190.0l3.5 1.1v4.3l-3.5 -1.1zM1164.6 199.0l3.5 1.1v4.3l-3.5 -1.1z"/>
<path fill="#1d4a86" d="M1100.7 36.4L1131.8 22.3v1.9L1100.7 38.3zM1100.2 32.6L1129.5 19.3v1.9L1100.2 34.5zM1106.0 25.6L1122.0 18.3v1.8L1106.0 27.4zM1136.0 22.3L1174.8 35.4v1.9L1136.0 24.2zM1139.0 19.3L1175.8 31.6v1.9L1139.0 21.2zM1150.0 18.3L1167.8 24.6v1.8L1150.0 20.1z"/>
<path fill="#b03030" d="M1049.0 88.0l1.5 -0.7v2.8l-1.5 0.7zM1054.3 85.6l1.5 -0.7v2.8l-1.5 0.7zM1056.9 84.4l1.5 -0.7v2.8l-1.5 0.7zM1059.6 83.2l1.5 -0.7v2.8l-1.5 0.7zM1062.2 82.0l1.5 -0.7v2.8l-1.5 0.7zM1064.9 80.8l1.5 -0.7v2.8l-1.5 0.7zM1049.0 94.4l1.5 -0.7v2.8l-1.5 0.7zM1051.6 93.2l1.5 -0.7v2.8l-1.5 0.7zM1054.3 92.0l1.5 -0.7v2.8l-1.5 0.7zM1056.9 90.8l1.5 -0.7v2.8l-1.5 0.7zM1059.6 89.6l1.5 -0.7v2.8l-1.5 0.7zM1064.9 87.2l1.5 -0.7v2.8l-1.5 0.7z"/>
<path fill="#cfd3d8" d="M1051.6 86.8l1.5 -0.7v2.8l-1.5 0.7zM1062.2 88.4l1.5 -0.7v2.8l-1.5 0.7zM1051.6 99.6l1.5 -0.7v2.8l-1.5 0.7zM1059.6 102.4l1.5 -0.7v2.8l-1.5 0.7zM1051.6 131.6l1.5 -0.7v2.8l-1.5 0.7zM1054.3 130.4l1.5 -0.7v2.8l-1.5 0.7zM1059.6 128.0l1.5 -0.7v2.8l-1.5 0.7zM1064.9 125.6l1.5 -0.7v2.8l-1.5 0.7zM1051.6 157.2l1.5 -0.7v2.8l-1.5 0.7zM1059.6 153.6l1.5 -0.7v2.8l-1.5 0.7zM1051.6 163.6l1.5 -0.7v2.8l-1.5 0.7zM1062.2 158.8l1.5 -0.7v2.8l-1.5 0.7zM1049.0 171.2l1.5 -0.7v2.8l-1.5 0.7zM1056.9 167.6l1.5 -0.7v2.8l-1.5 0.7zM1062.2 171.6l1.5 -0.7v2.8l-1.5 0.7zM1064.9 170.4l1.5 -0.7v2.8l-1.5 0.7zM1054.3 181.6l1.5 -0.7v2.8l-1.5 0.7zM1064.9 176.8l1.5 -0.7v2.8l-1.5 0.7zM1051.6 189.2l1.5 -0.7v2.8l-1.5 0.7zM1051.6 195.6l1.5 -0.7v2.8l-1.5 0.7zM1059.6 192.0l1.5 -0.7v2.8l-1.5 0.7zM1064.9 189.6l1.5 -0.7v2.8l-1.5 0.7zM1071.5 81.5l2.1 0.7v2.9l-2.1 -0.7zM1075.1 82.7l2.1 0.7v2.9l-2.1 -0.7zM1078.8 83.9l2.1 0.7v2.9l-2.1 -0.7zM1082.4 85.1l2.1 0.7v2.9l-2.1 -0.7zM1093.4 88.7l2.1 0.7v2.9l-2.1 -0.7zM1078.8 90.3l2.1 0.7v2.9l-2.1 -0.7zM1086.1 99.1l2.1 0.7v2.9l-2.1 -0.7zM1078.8 103.1l2.1 0.7v2.9l-2.1 -0.7zM1082.4 104.3l2.1 0.7v2.9l-2.1 -0.7zM1086.1 105.5l2.1 0.7v2.9l-2.1 -0.7zM1089.7 106.7l2.1 0.7v2.9l-2.1 -0.7zM1071.5 107.1l2.1 0.7v2.9l-2.1 -0.7zM1075.1 108.3l2.1 0.7v2.9l-2.1 -0.7zM1078.8 109.5l2.1 0.7v2.9l-2.1 -0.7zM1093.4 114.3l2.1 0.7v2.9l-2.1 -0.7zM1071.5 113.5l2.1 0.7v2.9l-2.1 -0.7zM1075.1 114.7l2.1 0.7v2.9l-2.1 -0.7zM1082.4 117.1l2.1 0.7v2.9l-2.1 -0.7zM1089.7 119.5l2.1 0.7v2.9l-2.1 -0.7zM1078.8 122.3l2.1 0.7v2.9l-2.1 -0.7zM1086.1 124.7l2.1 0.7v2.9l-2.1 -0.7zM1089.7 125.9l2.1 0.7v2.9l-2.1 -0.7zM1093.4 127.1l2.1 0.7v2.9l-2.1 -0.7zM1082.4 129.9l2.1 0.7v2.9l-2.1 -0.7zM1089.7 132.3l2.1 0.7v2.9l-2.1 -0.7zM1093.4 133.5l2.1 0.7v2.9l-2.1 -0.7zM1071.5 132.7l2.1 0.7v2.9l-2.1 -0.7zM1078.8 135.1l2.1 0.7v2.9l-2.1 -0.7zM1082.4 136.3l2.1 0.7v2.9l-2.1 -0.7zM1086.1 137.5l2.1 0.7v2.9l-2.1 -0.7zM1089.7 138.7l2.1 0.7v2.9l-2.1 -0.7zM1093.4 146.3l2.1 0.7v2.9l-2.1 -0.7zM1075.1 146.7l2.1 0.7v2.9l-2.1 -0.7zM1086.1 150.3l2.1 0.7v2.9l-2.1 -0.7zM1082.4 155.5l2.1 0.7v2.9l-2.1 -0.7zM1093.4 165.5l2.1 0.7v2.9l-2.1 -0.7zM1071.5 164.7l2.1 0.7v2.9l-2.1 -0.7zM1075.1 165.9l2.1 0.7v2.9l-2.1 -0.7zM1078.8 167.1l2.1 0.7v2.9l-2.1 -0.7zM1082.4 168.3l2.1 0.7v2.9l-2.1 -0.7zM1082.4 174.7l2.1 0.7v2.9l-2.1 -0.7zM1078.8 179.9l2.1 0.7v2.9l-2.1 -0.7zM1086.1 182.3l2.1 0.7v2.9l-2.1 -0.7zM1089.7 183.5l2.1 0.7v2.9l-2.1 -0.7zM1093.4 184.7l2.1 0.7v2.9l-2.1 -0.7zM1075.1 185.1l2.1 0.7v2.9l-2.1 -0.7zM1086.1 195.1l2.1 0.7v2.9l-2.1 -0.7zM1089.7 196.3l2.1 0.7v2.9l-2.1 -0.7zM1093.4 197.5l2.1 0.7v2.9l-2.1 -0.7zM1075.1 197.9l2.1 0.7v2.9l-2.1 -0.7zM1082.4 200.3l2.1 0.7v2.9l-2.1 -0.7zM1086.1 201.5l2.1 0.7v2.9l-2.1 -0.7zM1089.7 202.7l2.1 0.7v2.9l-2.1 -0.7zM1013.2 136.1l1.7 -0.4v2.6l-1.7 0.4zM1026.0 133.3l1.7 -0.4v2.6l-1.7 0.4zM1020.9 144.6l1.7 -0.4v2.6l-1.7 0.4zM1013.2 151.4l1.7 -0.4v2.6l-1.7 0.4zM1018.3 155.4l1.7 -0.4v2.6l-1.7 0.4zM1020.9 154.8l1.7 -0.4v2.6l-1.7 0.4zM1015.8 161.0l1.7 -0.4v2.6l-1.7 0.4zM1026.0 158.8l1.7 -0.4v2.6l-1.7 0.4zM1018.3 165.6l1.7 -0.4v2.6l-1.7 0.4zM1018.3 175.8l1.7 -0.4v2.6l-1.7 0.4zM1020.9 175.2l1.7 -0.4v2.6l-1.7 0.4zM1018.3 191.1l1.7 -0.4v2.6l-1.7 0.4zM1018.3 196.2l1.7 -0.4v2.6l-1.7 0.4zM1023.4 195.1l1.7 -0.4v2.6l-1.7 0.4zM862.7 127.4l1.5 -0.6v2.1l-1.5 0.6zM873.7 122.8l1.5 -0.6v2.1l-1.5 0.6zM862.7 132.9l1.5 -0.6v2.1l-1.5 0.6zM868.2 130.6l1.5 -0.6v2.1l-1.5 0.6zM859.9 145.0l1.5 -0.6v2.1l-1.5 0.6zM859.9 150.5l1.5 -0.6v2.1l-1.5 0.6zM865.4 148.2l1.5 -0.6v2.1l-1.5 0.6zM868.2 147.1l1.5 -0.6v2.1l-1.5 0.6zM873.7 144.8l1.5 -0.6v2.1l-1.5 0.6zM862.7 154.9l1.5 -0.6v2.1l-1.5 0.6zM868.2 152.6l1.5 -0.6v2.1l-1.5 0.6zM859.9 161.5l1.5 -0.6v2.1l-1.5 0.6zM870.9 157.0l1.5 -0.6v2.1l-1.5 0.6zM859.9 172.5l1.5 -0.6v2.1l-1.5 0.6zM868.2 169.1l1.5 -0.6v2.1l-1.5 0.6zM876.4 165.7l1.5 -0.6v2.1l-1.5 0.6zM868.2 174.6l1.5 -0.6v2.1l-1.5 0.6zM868.2 180.1l1.5 -0.6v2.1l-1.5 0.6zM873.7 177.8l1.5 -0.6v2.1l-1.5 0.6zM865.4 186.7l1.5 -0.6v2.1l-1.5 0.6zM870.9 184.5l1.5 -0.6v2.1l-1.5 0.6zM873.7 188.8l1.5 -0.6v2.1l-1.5 0.6zM865.4 203.2l1.5 -0.6v2.1l-1.5 0.6zM870.9 201.0l1.5 -0.6v2.1l-1.5 0.6zM888.4 118.2l1.9 0.5v2.2l-1.9 -0.5zM892.1 119.1l1.9 0.5v2.2l-1.9 -0.5zM903.3 122.1l1.9 0.5v2.2l-1.9 -0.5zM881.0 121.7l1.9 0.5v2.2l-1.9 -0.5zM888.4 123.7l1.9 0.5v2.2l-1.9 -0.5zM895.9 125.6l1.9 0.5v2.2l-1.9 -0.5zM888.4 129.2l1.9 0.5v2.2l-1.9 -0.5zM892.1 130.1l1.9 0.5v2.2l-1.9 -0.5zM899.6 137.6l1.9 0.5v2.2l-1.9 -0.5zM881.0 138.2l1.9 0.5v2.2l-1.9 -0.5zM884.7 139.2l1.9 0.5v2.2l-1.9 -0.5zM888.4 140.2l1.9 0.5v2.2l-1.9 -0.5zM892.1 141.1l1.9 0.5v2.2l-1.9 -0.5zM899.6 143.1l1.9 0.5v2.2l-1.9 -0.5zM881.0 143.7l1.9 0.5v2.2l-1.9 -0.5zM884.7 144.7l1.9 0.5v2.2l-1.9 -0.5zM899.6 148.6l1.9 0.5v2.2l-1.9 -0.5zM903.3 149.6l1.9 0.5v2.2l-1.9 -0.5zM895.9 153.1l1.9 0.5v2.2l-1.9 -0.5zM903.3 155.1l1.9 0.5v2.2l-1.9 -0.5zM881.0 154.7l1.9 0.5v2.2l-1.9 -0.5zM884.7 155.7l1.9 0.5v2.2l-1.9 -0.5zM888.4 156.7l1.9 0.5v2.2l-1.9 -0.5zM892.1 157.6l1.9 0.5v2.2l-1.9 -0.5zM884.7 161.2l1.9 0.5v2.2l-1.9 -0.5zM892.1 163.1l1.9 0.5v2.2l-1.9 -0.5zM899.6 165.1l1.9 0.5v2.2l-1.9 -0.5zM903.3 166.1l1.9 0.5v2.2l-1.9 -0.5zM888.4 167.7l1.9 0.5v2.2l-1.9 -0.5zM899.6 176.1l1.9 0.5v2.2l-1.9 -0.5zM903.3 177.1l1.9 0.5v2.2l-1.9 -0.5zM881.0 176.7l1.9 0.5v2.2l-1.9 -0.5zM892.1 179.6l1.9 0.5v2.2l-1.9 -0.5zM895.9 180.6l1.9 0.5v2.2l-1.9 -0.5zM881.0 182.2l1.9 0.5v2.2l-1.9 -0.5zM888.4 184.2l1.9 0.5v2.2l-1.9 -0.5zM899.6 187.1l1.9 0.5v2.2l-1.9 -0.5zM903.3 188.1l1.9 0.5v2.2l-1.9 -0.5zM881.0 187.7l1.9 0.5v2.2l-1.9 -0.5zM884.7 188.7l1.9 0.5v2.2l-1.9 -0.5zM899.6 192.6l1.9 0.5v2.2l-1.9 -0.5zM881.0 193.2l1.9 0.5v2.2l-1.9 -0.5zM884.7 194.2l1.9 0.5v2.2l-1.9 -0.5zM888.4 195.2l1.9 0.5v2.2l-1.9 -0.5zM895.9 197.1l1.9 0.5v2.2l-1.9 -0.5zM892.1 201.6l1.9 0.5v2.2l-1.9 -0.5zM946.1 123.9l1.5 0.3v2.3l-1.5 -0.3zM940.6 133.6l1.5 0.3v2.3l-1.5 -0.3zM943.3 139.6l1.5 0.3v2.3l-1.5 -0.3zM946.1 145.5l1.5 0.3v2.3l-1.5 -0.3zM940.6 155.2l1.5 0.3v2.3l-1.5 -0.3zM943.3 155.8l1.5 0.3v2.3l-1.5 -0.3zM946.1 161.7l1.5 0.3v2.3l-1.5 -0.3zM943.3 166.6l1.5 0.3v2.3l-1.5 -0.3zM943.3 172.0l1.5 0.3v2.3l-1.5 -0.3zM940.6 176.8l1.5 0.3v2.3l-1.5 -0.3zM940.6 187.6l1.5 0.3v2.3l-1.5 -0.3zM946.1 188.7l1.5 0.3v2.3l-1.5 -0.3zM946.1 194.1l1.5 0.3v2.3l-1.5 -0.3z"/>
<path fill="#bc422c" d="M1049.0 100.8l1.5 -0.7v2.8l-1.5 0.7zM1054.3 98.4l1.5 -0.7v2.8l-1.5 0.7zM1056.9 97.2l1.5 -0.7v2.8l-1.5 0.7zM1059.6 96.0l1.5 -0.7v2.8l-1.5 0.7zM1062.2 94.8l1.5 -0.7v2.8l-1.5 0.7zM1064.9 93.6l1.5 -0.7v2.8l-1.5 0.7zM1049.0 107.2l1.5 -0.7v2.8l-1.5 0.7zM1051.6 106.0l1.5 -0.7v2.8l-1.5 0.7zM1054.3 104.8l1.5 -0.7v2.8l-1.5 0.7zM1056.9 103.6l1.5 -0.7v2.8l-1.5 0.7zM1062.2 101.2l1.5 -0.7v2.8l-1.5 0.7zM1064.9 100.0l1.5 -0.7v2.8l-1.5 0.7z"/>
<path fill="#c85527" d="M1049.0 113.6l1.5 -0.7v2.8l-1.5 0.7zM1051.6 112.4l1.5 -0.7v2.8l-1.5 0.7zM1054.3 111.2l1.5 -0.7v2.8l-1.5 0.7zM1056.9 110.0l1.5 -0.7v2.8l-1.5 0.7zM1059.6 108.8l1.5 -0.7v2.8l-1.5 0.7zM1062.2 107.6l1.5 -0.7v2.8l-1.5 0.7zM1064.9 106.4l1.5 -0.7v2.8l-1.5 0.7zM1049.0 120.0l1.5 -0.7v2.8l-1.5 0.7zM1051.6 118.8l1.5 -0.7v2.8l-1.5 0.7zM1054.3 117.6l1.5 -0.7v2.8l-1.5 0.7zM1056.9 116.4l1.5 -0.7v2.8l-1.5 0.7zM1059.6 115.2l1.5 -0.7v2.8l-1.5 0.7zM1062.2 114.0l1.5 -0.7v2.8l-1.5 0.7zM1064.9 112.8l1.5 -0.7v2.8l-1.5 0.7z"/>
<path fill="#d46822" d="M1049.0 126.4l1.5 -0.7v2.8l-1.5 0.7zM1051.6 125.2l1.5 -0.7v2.8l-1.5 0.7zM1054.3 124.0l1.5 -0.7v2.8l-1.5 0.7zM1056.9 122.8l1.5 -0.7v2.8l-1.5 0.7zM1059.6 121.6l1.5 -0.7v2.8l-1.5 0.7zM1062.2 120.4l1.5 -0.7v2.8l-1.5 0.7zM1064.9 119.2l1.5 -0.7v2.8l-1.5 0.7zM1049.0 132.8l1.5 -0.7v2.8l-1.5 0.7zM1056.9 129.2l1.5 -0.7v2.8l-1.5 0.7zM1062.2 126.8l1.5 -0.7v2.8l-1.5 0.7z"/>
<path fill="#e07a1e" d="M1049.0 139.2l1.5 -0.7v2.8l-1.5 0.7zM1051.6 138.0l1.5 -0.7v2.8l-1.5 0.7zM1054.3 136.8l1.5 -0.7v2.8l-1.5 0.7zM1056.9 135.6l1.5 -0.7v2.8l-1.5 0.7zM1059.6 134.4l1.5 -0.7v2.8l-1.5 0.7zM1062.2 133.2l1.5 -0.7v2.8l-1.5 0.7zM1064.9 132.0l1.5 -0.7v2.8l-1.5 0.7zM1049.0 145.6l1.5 -0.7v2.8l-1.5 0.7zM1051.6 144.4l1.5 -0.7v2.8l-1.5 0.7zM1054.3 143.2l1.5 -0.7v2.8l-1.5 0.7zM1056.9 142.0l1.5 -0.7v2.8l-1.5 0.7zM1059.6 140.8l1.5 -0.7v2.8l-1.5 0.7zM1062.2 139.6l1.5 -0.7v2.8l-1.5 0.7zM1064.9 138.4l1.5 -0.7v2.8l-1.5 0.7zM1049.0 152.0l1.5 -0.7v2.8l-1.5 0.7zM1051.6 150.8l1.5 -0.7v2.8l-1.5 0.7zM1054.3 149.6l1.5 -0.7v2.8l-1.5 0.7zM1056.9 148.4l1.5 -0.7v2.8l-1.5 0.7zM1059.6 147.2l1.5 -0.7v2.8l-1.5 0.7zM1062.2 146.0l1.5 -0.7v2.8l-1.5 0.7zM1064.9 144.8l1.5 -0.7v2.8l-1.5 0.7zM1049.0 158.4l1.5 -0.7v2.8l-1.5 0.7zM1054.3 156.0l1.5 -0.7v2.8l-1.5 0.7zM1056.9 154.8l1.5 -0.7v2.8l-1.5 0.7zM1062.2 152.4l1.5 -0.7v2.8l-1.5 0.7zM1064.9 151.2l1.5 -0.7v2.8l-1.5 0.7zM1049.0 164.8l1.5 -0.7v2.8l-1.5 0.7zM1054.3 162.4l1.5 -0.7v2.8l-1.5 0.7zM1056.9 161.2l1.5 -0.7v2.8l-1.5 0.7zM1059.6 160.0l1.5 -0.7v2.8l-1.5 0.7zM1064.9 157.6l1.5 -0.7v2.8l-1.5 0.7zM1051.6 170.0l1.5 -0.7v2.8l-1.5 0.7zM1054.3 168.8l1.5 -0.7v2.8l-1.5 0.7zM1059.6 166.4l1.5 -0.7v2.8l-1.5 0.7zM1062.2 165.2l1.5 -0.7v2.8l-1.5 0.7zM1064.9 164.0l1.5 -0.7v2.8l-1.5 0.7zM1049.0 177.6l1.5 -0.7v2.8l-1.5 0.7zM1051.6 176.4l1.5 -0.7v2.8l-1.5 0.7zM1054.3 175.2l1.5 -0.7v2.8l-1.5 0.7zM1056.9 174.0l1.5 -0.7v2.8l-1.5 0.7zM1059.6 172.8l1.5 -0.7v2.8l-1.5 0.7zM1049.0 184.0l1.5 -0.7v2.8l-1.5 0.7zM1051.6 182.8l1.5 -0.7v2.8l-1.5 0.7zM1056.9 180.4l1.5 -0.7v2.8l-1.5 0.7zM1059.6 179.2l1.5 -0.7v2.8l-1.5 0.7zM1062.2 178.0l1.5 -0.7v2.8l-1.5 0.7zM1049.0 190.4l1.5 -0.7v2.8l-1.5 0.7zM1054.3 188.0l1.5 -0.7v2.8l-1.5 0.7zM1056.9 186.8l1.5 -0.7v2.8l-1.5 0.7zM1059.6 185.6l1.5 -0.7v2.8l-1.5 0.7zM1062.2 184.4l1.5 -0.7v2.8l-1.5 0.7zM1064.9 183.2l1.5 -0.7v2.8l-1.5 0.7zM1049.0 196.8l1.5 -0.7v2.8l-1.5 0.7zM1054.3 194.4l1.5 -0.7v2.8l-1.5 0.7zM1056.9 193.2l1.5 -0.7v2.8l-1.5 0.7zM1062.2 190.8l1.5 -0.7v2.8l-1.5 0.7zM1049.0 203.2l1.5 -0.7v2.8l-1.5 0.7zM1051.6 202.0l1.5 -0.7v2.8l-1.5 0.7zM1054.3 200.8l1.5 -0.7v2.8l-1.5 0.7zM1056.9 199.6l1.5 -0.7v2.8l-1.5 0.7zM1059.6 198.4l1.5 -0.7v2.8l-1.5 0.7zM1062.2 197.2l1.5 -0.7v2.8l-1.5 0.7zM1064.9 196.0l1.5 -0.7v2.8l-1.5 0.7z"/>
<path fill="#a83030" d="M1086.1 86.3l2.1 0.7v2.9l-2.1 -0.7zM1089.7 87.5l2.1 0.7v2.9l-2.1 -0.7zM1071.5 87.9l2.1 0.7v2.9l-2.1 -0.7zM1075.1 89.1l2.1 0.7v2.9l-2.1 -0.7zM1082.4 91.5l2.1 0.7v2.9l-2.1 -0.7zM1086.1 92.7l2.1 0.7v2.9l-2.1 -0.7zM1089.7 93.9l2.1 0.7v2.9l-2.1 -0.7zM1093.4 95.1l2.1 0.7v2.9l-2.1 -0.7z"/>
<path fill="#b2362a" d="M1071.5 94.3l2.1 0.7v2.9l-2.1 -0.7zM1075.1 95.5l2.1 0.7v2.9l-2.1 -0.7zM1078.8 96.7l2.1 0.7v2.9l-2.1 -0.7zM1082.4 97.9l2.1 0.7v2.9l-2.1 -0.7zM1089.7 100.3l2.1 0.7v2.9l-2.1 -0.7zM1093.4 101.5l2.1 0.7v2.9l-2.1 -0.7zM1071.5 100.7l2.1 0.7v2.9l-2.1 -0.7zM1075.1 101.9l2.1 0.7v2.9l-2.1 -0.7zM1093.4 107.9l2.1 0.7v2.9l-2.1 -0.7z"/>
<path fill="#bd3d24" d="M1082.4 110.7l2.1 0.7v2.9l-2.1 -0.7zM1086.1 111.9l2.1 0.7v2.9l-2.1 -0.7zM1089.7 113.1l2.1 0.7v2.9l-2.1 -0.7zM1078.8 115.9l2.1 0.7v2.9l-2.1 -0.7zM1086.1 118.3l2.1 0.7v2.9l-2.1 -0.7zM1093.4 120.7l2.1 0.7v2.9l-2.1 -0.7z"/>
<path fill="#c8441e" d="M1071.5 119.9l2.1 0.7v2.9l-2.1 -0.7zM1075.1 121.1l2.1 0.7v2.9l-2.1 -0.7zM1082.4 123.5l2.1 0.7v2.9l-2.1 -0.7zM1071.5 126.3l2.1 0.7v2.9l-2.1 -0.7zM1075.1 127.5l2.1 0.7v2.9l-2.1 -0.7zM1078.8 128.7l2.1 0.7v2.9l-2.1 -0.7zM1086.1 131.1l2.1 0.7v2.9l-2.1 -0.7zM1075.1 133.9l2.1 0.7v2.9l-2.1 -0.7zM1093.4 139.9l2.1 0.7v2.9l-2.1 -0.7z"/>
<path fill="#d24a18" d="M1071.5 139.1l2.1 0.7v2.9l-2.1 -0.7zM1075.1 140.3l2.1 0.7v2.9l-2.1 -0.7zM1078.8 141.5l2.1 0.7v2.9l-2.1 -0.7zM1082.4 142.7l2.1 0.7v2.9l-2.1 -0.7zM1086.1 143.9l2.1 0.7v2.9l-2.1 -0.7zM1089.7 145.1l2.1 0.7v2.9l-2.1 -0.7zM1071.5 145.5l2.1 0.7v2.9l-2.1 -0.7zM1078.8 147.9l2.1 0.7v2.9l-2.1 -0.7zM1082.4 149.1l2.1 0.7v2.9l-2.1 -0.7zM1089.7 151.5l2.1 0.7v2.9l-2.1 -0.7zM1093.4 152.7l2.1 0.7v2.9l-2.1 -0.7zM1071.5 151.9l2.1 0.7v2.9l-2.1 -0.7zM1075.1 153.1l2.1 0.7v2.9l-2.1 -0.7zM1078.8 154.3l2.1 0.7v2.9l-2.1 -0.7zM1086.1 156.7l2.1 0.7v2.9l-2.1 -0.7zM1089.7 157.9l2.1 0.7v2.9l-2.1 -0.7zM1093.4 159.1l2.1 0.7v2.9l-2.1 -0.7zM1071.5 158.3l2.1 0.7v2.9l-2.1 -0.7zM1075.1 159.5l2.1 0.7v2.9l-2.1 -0.7zM1078.8 160.7l2.1 0.7v2.9l-2.1 -0.7zM1082.4 161.9l2.1 0.7v2.9l-2.1 -0.7zM1086.1 163.1l2.1 0.7v2.9l-2.1 -0.7zM1089.7 164.3l2.1 0.7v2.9l-2.1 -0.7zM1086.1 169.5l2.1 0.7v2.9l-2.1 -0.7zM1089.7 170.7l2.1 0.7v2.9l-2.1 -0.7zM1093.4 171.9l2.1 0.7v2.9l-2.1 -0.7zM1071.5 171.1l2.1 0.7v2.9l-2.1 -0.7zM1075.1 172.3l2.1 0.7v2.9l-2.1 -0.7zM1078.8 173.5l2.1 0.7v2.9l-2.1 -0.7zM1086.1 175.9l2.1 0.7v2.9l-2.1 -0.7zM1089.7 177.1l2.1 0.7v2.9l-2.1 -0.7zM1093.4 178.3l2.1 0.7v2.9l-2.1 -0.7zM1071.5 177.5l2.1 0.7v2.9l-2.1 -0.7zM1075.1 178.7l2.1 0.7v2.9l-2.1 -0.7zM1082.4 181.1l2.1 0.7v2.9l-2.1 -0.7zM1071.5 183.9l2.1 0.7v2.9l-2.1 -0.7zM1078.8 186.3l2.1 0.7v2.9l-2.1 -0.7zM1082.4 187.5l2.1 0.7v2.9l-2.1 -0.7zM1086.1 188.7l2.1 0.7v2.9l-2.1 -0.7zM1089.7 189.9l2.1 0.7v2.9l-2.1 -0.7zM1093.4 191.1l2.1 0.7v2.9l-2.1 -0.7zM1071.5 190.3l2.1 0.7v2.9l-2.1 -0.7zM1075.1 191.5l2.1 0.7v2.9l-2.1 -0.7zM1078.8 192.7l2.1 0.7v2.9l-2.1 -0.7zM1082.4 193.9l2.1 0.7v2.9l-2.1 -0.7zM1071.5 196.7l2.1 0.7v2.9l-2.1 -0.7zM1078.8 199.1l2.1 0.7v2.9l-2.1 -0.7zM1093.4 203.9l2.1 0.7v2.9l-2.1 -0.7z"/>
<path fill="#e9b55e" d="M1011.0 127.2L1029.5 121.8v0.9L1011.0 128.1zM1031.0 121.8L1041.2 125.4v0.9L1031.0 122.7zM1011.0 128.1L1029.5 122.7v0.9L1011.0 129.0zM1031.0 122.7L1041.2 126.3v0.9L1031.0 123.6zM1011.0 129.0L1029.5 123.6v0.9L1011.0 129.9zM1031.0 123.6L1041.2 127.2v0.9L1031.0 124.5z"/>
<path fill="#e8a020" d="M1013.2 131.0l1.7 -0.4v2.6l-1.7 0.4zM1015.8 130.4l1.7 -0.4v2.6l-1.7 0.4zM1018.3 129.9l1.7 -0.4v2.6l-1.7 0.4zM1020.9 129.3l1.7 -0.4v2.6l-1.7 0.4zM1023.4 128.8l1.7 -0.4v2.6l-1.7 0.4zM1026.0 128.2l1.7 -0.4v2.6l-1.7 0.4zM1015.8 135.5l1.7 -0.4v2.6l-1.7 0.4zM1018.3 135.0l1.7 -0.4v2.6l-1.7 0.4zM1020.9 134.4l1.7 -0.4v2.6l-1.7 0.4zM1023.4 133.9l1.7 -0.4v2.6l-1.7 0.4z"/>
<path fill="#e69f22" d="M1013.2 141.2l1.7 -0.4v2.6l-1.7 0.4zM1015.8 140.6l1.7 -0.4v2.6l-1.7 0.4zM1018.3 140.1l1.7 -0.4v2.6l-1.7 0.4zM1020.9 139.5l1.7 -0.4v2.6l-1.7 0.4zM1023.4 139.0l1.7 -0.4v2.6l-1.7 0.4zM1026.0 138.4l1.7 -0.4v2.6l-1.7 0.4zM1013.2 146.3l1.7 -0.4v2.6l-1.7 0.4zM1015.8 145.7l1.7 -0.4v2.6l-1.7 0.4zM1018.3 145.2l1.7 -0.4v2.6l-1.7 0.4zM1023.4 144.1l1.7 -0.4v2.6l-1.7 0.4zM1026.0 143.5l1.7 -0.4v2.6l-1.7 0.4zM1015.8 150.8l1.7 -0.4v2.6l-1.7 0.4zM1018.3 150.3l1.7 -0.4v2.6l-1.7 0.4zM1020.9 149.7l1.7 -0.4v2.6l-1.7 0.4zM1023.4 149.2l1.7 -0.4v2.6l-1.7 0.4zM1026.0 148.6l1.7 -0.4v2.6l-1.7 0.4z"/>
<path fill="#e59e23" d="M1013.2 156.5l1.7 -0.4v2.6l-1.7 0.4zM1015.8 155.9l1.7 -0.4v2.6l-1.7 0.4zM1023.4 154.3l1.7 -0.4v2.6l-1.7 0.4zM1026.0 153.7l1.7 -0.4v2.6l-1.7 0.4zM1013.2 161.6l1.7 -0.4v2.6l-1.7 0.4zM1018.3 160.5l1.7 -0.4v2.6l-1.7 0.4zM1020.9 159.9l1.7 -0.4v2.6l-1.7 0.4zM1023.4 159.4l1.7 -0.4v2.6l-1.7 0.4z"/>
<path fill="#e39c25" d="M1013.2 166.7l1.7 -0.4v2.6l-1.7 0.4zM1015.8 166.1l1.7 -0.4v2.6l-1.7 0.4zM1020.9 165.0l1.7 -0.4v2.6l-1.7 0.4zM1023.4 164.5l1.7 -0.4v2.6l-1.7 0.4zM1026.0 163.9l1.7 -0.4v2.6l-1.7 0.4zM1013.2 171.8l1.7 -0.4v2.6l-1.7 0.4zM1015.8 171.2l1.7 -0.4v2.6l-1.7 0.4zM1018.3 170.7l1.7 -0.4v2.6l-1.7 0.4zM1020.9 170.1l1.7 -0.4v2.6l-1.7 0.4zM1023.4 169.6l1.7 -0.4v2.6l-1.7 0.4zM1026.0 169.0l1.7 -0.4v2.6l-1.7 0.4zM1013.2 176.9l1.7 -0.4v2.6l-1.7 0.4zM1015.8 176.3l1.7 -0.4v2.6l-1.7 0.4zM1023.4 174.7l1.7 -0.4v2.6l-1.7 0.4zM1026.0 174.1l1.7 -0.4v2.6l-1.7 0.4z"/>
<path fill="#e29b26" d="M1013.2 182.0l1.7 -0.4v2.6l-1.7 0.4zM1015.8 181.4l1.7 -0.4v2.6l-1.7 0.4zM1018.3 180.9l1.7 -0.4v2.6l-1.7 0.4zM1020.9 180.3l1.7 -0.4v2.6l-1.7 0.4zM1023.4 179.8l1.7 -0.4v2.6l-1.7 0.4zM1026.0 179.2l1.7 -0.4v2.6l-1.7 0.4zM1013.2 187.1l1.7 -0.4v2.6l-1.7 0.4zM1015.8 186.5l1.7 -0.4v2.6l-1.7 0.4zM1018.3 186.0l1.7 -0.4v2.6l-1.7 0.4zM1020.9 185.4l1.7 -0.4v2.6l-1.7 0.4zM1023.4 184.9l1.7 -0.4v2.6l-1.7 0.4zM1026.0 184.3l1.7 -0.4v2.6l-1.7 0.4zM1013.2 192.2l1.7 -0.4v2.6l-1.7 0.4zM1015.8 191.6l1.7 -0.4v2.6l-1.7 0.4zM1020.9 190.5l1.7 -0.4v2.6l-1.7 0.4zM1023.4 190.0l1.7 -0.4v2.6l-1.7 0.4zM1026.0 189.4l1.7 -0.4v2.6l-1.7 0.4z"/>
<path fill="#e09a28" d="M1013.2 197.3l1.7 -0.4v2.6l-1.7 0.4zM1015.8 196.7l1.7 -0.4v2.6l-1.7 0.4zM1020.9 195.6l1.7 -0.4v2.6l-1.7 0.4zM1026.0 194.5l1.7 -0.4v2.6l-1.7 0.4z"/>
<path fill="#e6ad55" d="M1031.3 124.5h1.0v74.5h-1.0zM1033.6 124.5h1.0v74.5h-1.0zM1035.8 124.5h1.0v74.5h-1.0zM1037.7 124.5h1.0v74.5h-1.0zM1039.5 124.5h1.0v74.5h-1.0z"/>
<path fill="#1f4f8f" d="M1183.3 79.0l1.5 -0.5v2.4l-1.5 0.5zM1185.8 78.1l1.5 -0.5v2.4l-1.5 0.5zM1188.4 77.2l1.5 -0.5v2.4l-1.5 0.5zM1190.9 76.3l1.5 -0.5v2.4l-1.5 0.5zM1193.5 75.4l1.5 -0.5v2.4l-1.5 0.5zM1183.3 83.5l1.5 -0.5v2.4l-1.5 0.5zM1185.8 82.5l1.5 -0.5v2.4l-1.5 0.5zM1188.4 81.7l1.5 -0.5v2.4l-1.5 0.5zM1190.9 80.8l1.5 -0.5v2.4l-1.5 0.5zM1185.8 87.0l1.5 -0.5v2.4l-1.5 0.5zM1188.4 86.1l1.5 -0.5v2.4l-1.5 0.5zM1190.9 85.2l1.5 -0.5v2.4l-1.5 0.5zM1193.5 84.3l1.5 -0.5v2.4l-1.5 0.5zM1183.3 92.4l1.5 -0.5v2.4l-1.5 0.5zM1185.8 91.5l1.5 -0.5v2.4l-1.5 0.5zM1188.4 90.6l1.5 -0.5v2.4l-1.5 0.5zM1185.8 95.9l1.5 -0.5v2.4l-1.5 0.5zM1190.9 94.1l1.5 -0.5v2.4l-1.5 0.5zM1193.5 93.2l1.5 -0.5v2.4l-1.5 0.5zM1183.3 101.3l1.5 -0.5v2.4l-1.5 0.5zM1185.8 100.4l1.5 -0.5v2.4l-1.5 0.5zM1188.4 99.5l1.5 -0.5v2.4l-1.5 0.5zM1190.9 98.6l1.5 -0.5v2.4l-1.5 0.5zM1193.5 97.7l1.5 -0.5v2.4l-1.5 0.5zM1180.0 109.0l1.6 -0.5v2.4l-1.6 0.5zM1182.8 108.1l1.6 -0.5v2.4l-1.6 0.5zM1185.5 107.2l1.6 -0.5v2.4l-1.6 0.5zM1191.0 105.4l1.6 -0.5v2.4l-1.6 0.5zM1193.8 104.5l1.6 -0.5v2.4l-1.6 0.5zM1182.8 112.5l1.6 -0.5v2.4l-1.6 0.5zM1185.5 111.7l1.6 -0.5v2.4l-1.6 0.5zM1188.2 110.8l1.6 -0.5v2.4l-1.6 0.5zM1191.0 109.9l1.6 -0.5v2.4l-1.6 0.5zM1193.8 109.0l1.6 -0.5v2.4l-1.6 0.5zM1180.0 117.9l1.6 -0.5v2.4l-1.6 0.5zM1182.8 117.0l1.6 -0.5v2.4l-1.6 0.5zM1185.5 116.1l1.6 -0.5v2.4l-1.6 0.5zM1188.2 115.2l1.6 -0.5v2.4l-1.6 0.5zM1191.0 114.3l1.6 -0.5v2.4l-1.6 0.5zM1193.8 113.4l1.6 -0.5v2.4l-1.6 0.5zM1185.5 120.6l1.6 -0.5v2.4l-1.6 0.5zM1188.2 119.7l1.6 -0.5v2.4l-1.6 0.5zM1191.0 118.8l1.6 -0.5v2.4l-1.6 0.5zM1193.8 117.9l1.6 -0.5v2.4l-1.6 0.5zM1182.8 125.9l1.6 -0.5v2.4l-1.6 0.5zM1185.5 125.0l1.6 -0.5v2.4l-1.6 0.5zM1188.2 124.1l1.6 -0.5v2.4l-1.6 0.5zM1191.0 123.2l1.6 -0.5v2.4l-1.6 0.5zM1193.8 122.3l1.6 -0.5v2.4l-1.6 0.5zM1180.0 131.2l1.6 -0.5v2.4l-1.6 0.5zM1185.5 129.4l1.6 -0.5v2.4l-1.6 0.5zM1188.2 128.6l1.6 -0.5v2.4l-1.6 0.5zM1191.0 127.7l1.6 -0.5v2.4l-1.6 0.5zM1193.8 126.8l1.6 -0.5v2.4l-1.6 0.5zM1180.0 135.7l1.6 -0.5v2.4l-1.6 0.5zM1182.8 134.8l1.6 -0.5v2.4l-1.6 0.5zM1185.5 133.9l1.6 -0.5v2.4l-1.6 0.5zM1188.2 133.0l1.6 -0.5v2.4l-1.6 0.5zM1191.0 132.1l1.6 -0.5v2.4l-1.6 0.5zM1180.0 140.1l1.6 -0.5v2.4l-1.6 0.5zM1182.8 139.2l1.6 -0.5v2.4l-1.6 0.5zM1185.5 138.3l1.6 -0.5v2.4l-1.6 0.5zM1188.2 137.4l1.6 -0.5v2.4l-1.6 0.5zM1191.0 136.5l1.6 -0.5v2.4l-1.6 0.5zM1180.0 144.6l1.6 -0.5v2.4l-1.6 0.5zM1182.8 143.7l1.6 -0.5v2.4l-1.6 0.5zM1185.5 142.8l1.6 -0.5v2.4l-1.6 0.5zM1193.8 140.1l1.6 -0.5v2.4l-1.6 0.5zM1180.0 149.0l1.6 -0.5v2.4l-1.6 0.5zM1182.8 148.1l1.6 -0.5v2.4l-1.6 0.5zM1185.5 147.2l1.6 -0.5v2.4l-1.6 0.5zM1188.2 146.3l1.6 -0.5v2.4l-1.6 0.5zM1193.8 144.5l1.6 -0.5v2.4l-1.6 0.5zM1180.0 153.5l1.6 -0.5v2.4l-1.6 0.5zM1182.8 152.6l1.6 -0.5v2.4l-1.6 0.5zM1185.5 151.7l1.6 -0.5v2.4l-1.6 0.5zM1188.2 150.8l1.6 -0.5v2.4l-1.6 0.5zM1191.0 149.9l1.6 -0.5v2.4l-1.6 0.5zM1193.8 149.0l1.6 -0.5v2.4l-1.6 0.5zM1180.0 157.9l1.6 -0.5v2.4l-1.6 0.5zM1182.8 157.0l1.6 -0.5v2.4l-1.6 0.5zM1185.5 156.1l1.6 -0.5v2.4l-1.6 0.5zM1188.2 155.2l1.6 -0.5v2.4l-1.6 0.5zM1193.8 153.4l1.6 -0.5v2.4l-1.6 0.5zM1180.0 162.4l1.6 -0.5v2.4l-1.6 0.5zM1182.8 161.5l1.6 -0.5v2.4l-1.6 0.5zM1185.5 160.6l1.6 -0.5v2.4l-1.6 0.5zM1188.2 159.7l1.6 -0.5v2.4l-1.6 0.5zM1191.0 158.8l1.6 -0.5v2.4l-1.6 0.5zM1193.8 157.9l1.6 -0.5v2.4l-1.6 0.5zM1182.8 165.9l1.6 -0.5v2.4l-1.6 0.5zM1185.5 165.0l1.6 -0.5v2.4l-1.6 0.5zM1188.2 164.1l1.6 -0.5v2.4l-1.6 0.5zM1191.0 163.2l1.6 -0.5v2.4l-1.6 0.5zM1193.8 162.3l1.6 -0.5v2.4l-1.6 0.5zM1180.0 171.3l1.6 -0.5v2.4l-1.6 0.5zM1182.8 170.4l1.6 -0.5v2.4l-1.6 0.5zM1185.5 169.5l1.6 -0.5v2.4l-1.6 0.5zM1188.2 168.6l1.6 -0.5v2.4l-1.6 0.5zM1191.0 167.7l1.6 -0.5v2.4l-1.6 0.5zM1193.8 166.8l1.6 -0.5v2.4l-1.6 0.5zM1180.0 175.7l1.6 -0.5v2.4l-1.6 0.5zM1182.8 174.8l1.6 -0.5v2.4l-1.6 0.5zM1185.5 173.9l1.6 -0.5v2.4l-1.6 0.5zM1188.2 173.0l1.6 -0.5v2.4l-1.6 0.5zM1191.0 172.1l1.6 -0.5v2.4l-1.6 0.5zM1193.8 171.2l1.6 -0.5v2.4l-1.6 0.5zM1180.0 180.2l1.6 -0.5v2.4l-1.6 0.5zM1182.8 179.3l1.6 -0.5v2.4l-1.6 0.5zM1185.5 178.4l1.6 -0.5v2.4l-1.6 0.5zM1188.2 177.5l1.6 -0.5v2.4l-1.6 0.5zM1191.0 176.6l1.6 -0.5v2.4l-1.6 0.5zM1180.0 184.6l1.6 -0.5v2.4l-1.6 0.5zM1182.8 183.7l1.6 -0.5v2.4l-1.6 0.5zM1185.5 182.8l1.6 -0.5v2.4l-1.6 0.5zM1180.0 189.1l1.6 -0.5v2.4l-1.6 0.5zM1182.8 188.2l1.6 -0.5v2.4l-1.6 0.5zM1185.5 187.3l1.6 -0.5v2.4l-1.6 0.5zM1188.2 186.4l1.6 -0.5v2.4l-1.6 0.5zM1191.0 185.5l1.6 -0.5v2.4l-1.6 0.5zM1193.8 184.6l1.6 -0.5v2.4l-1.6 0.5zM1180.0 193.5l1.6 -0.5v2.4l-1.6 0.5zM1182.8 192.6l1.6 -0.5v2.4l-1.6 0.5zM1185.5 191.7l1.6 -0.5v2.4l-1.6 0.5zM1188.2 190.8l1.6 -0.5v2.4l-1.6 0.5zM1193.8 189.0l1.6 -0.5v2.4l-1.6 0.5zM1180.0 198.0l1.6 -0.5v2.4l-1.6 0.5zM1182.8 197.1l1.6 -0.5v2.4l-1.6 0.5zM1185.5 196.2l1.6 -0.5v2.4l-1.6 0.5zM1188.2 195.3l1.6 -0.5v2.4l-1.6 0.5zM1193.8 193.5l1.6 -0.5v2.4l-1.6 0.5zM1180.0 202.4l1.6 -0.5v2.4l-1.6 0.5zM1182.8 201.5l1.6 -0.5v2.4l-1.6 0.5zM1188.2 199.7l1.6 -0.5v2.4l-1.6 0.5zM1191.0 198.8l1.6 -0.5v2.4l-1.6 0.5zM1193.8 197.9l1.6 -0.5v2.4l-1.6 0.5zM1197.9 73.8h1.1v28.7h-1.1zM1201.9 73.8h1.1v28.7h-1.1zM1197.3 104.4h1.2v94.6h-1.2zM1201.1 104.4h1.2v94.6h-1.2zM1204.3 104.4h1.2v94.6h-1.2z"/>
<path fill="#3f4f7c" d="M857.7 119.4L877.9 112.2v0.9L857.7 120.3zM857.2 117.1L877.9 109.5v0.9L857.2 118.0zM861.3 113.1L877.9 105.9v0.9L861.3 114.0zM880.6 111.3L906.3 118.9v0.9L880.6 112.2zM880.6 109.0L906.8 116.7v0.9L880.6 109.9zM880.6 105.9L901.8 112.2v0.9L880.6 106.8z"/>
<path fill="#1f3f7f" d="M859.9 123.0l1.5 -0.6v2.1l-1.5 0.6zM862.7 121.9l1.5 -0.6v2.1l-1.5 0.6zM865.4 120.7l1.5 -0.6v2.1l-1.5 0.6zM868.2 119.6l1.5 -0.6v2.1l-1.5 0.6zM870.9 118.5l1.5 -0.6v2.1l-1.5 0.6zM873.7 117.3l1.5 -0.6v2.1l-1.5 0.6zM876.4 116.2l1.5 -0.6v2.1l-1.5 0.6zM859.9 128.5l1.5 -0.6v2.1l-1.5 0.6zM865.4 126.2l1.5 -0.6v2.1l-1.5 0.6zM868.2 125.1l1.5 -0.6v2.1l-1.5 0.6zM870.9 124.0l1.5 -0.6v2.1l-1.5 0.6zM876.4 121.7l1.5 -0.6v2.1l-1.5 0.6z"/>
<path fill="#214181" d="M859.9 134.0l1.5 -0.6v2.1l-1.5 0.6zM865.4 131.7l1.5 -0.6v2.1l-1.5 0.6zM870.9 129.5l1.5 -0.6v2.1l-1.5 0.6zM873.7 128.3l1.5 -0.6v2.1l-1.5 0.6zM876.4 127.2l1.5 -0.6v2.1l-1.5 0.6zM859.9 139.5l1.5 -0.6v2.1l-1.5 0.6zM862.7 138.4l1.5 -0.6v2.1l-1.5 0.6zM865.4 137.2l1.5 -0.6v2.1l-1.5 0.6zM868.2 136.1l1.5 -0.6v2.1l-1.5 0.6zM870.9 135.0l1.5 -0.6v2.1l-1.5 0.6zM873.7 133.8l1.5 -0.6v2.1l-1.5 0.6zM876.4 132.7l1.5 -0.6v2.1l-1.5 0.6zM862.7 143.9l1.5 -0.6v2.1l-1.5 0.6zM865.4 142.7l1.5 -0.6v2.1l-1.5 0.6zM868.2 141.6l1.5 -0.6v2.1l-1.5 0.6zM870.9 140.5l1.5 -0.6v2.1l-1.5 0.6zM873.7 139.3l1.5 -0.6v2.1l-1.5 0.6zM876.4 138.2l1.5 -0.6v2.1l-1.5 0.6z"/>
<path fill="#234383" d="M862.7 149.4l1.5 -0.6v2.1l-1.5 0.6zM870.9 146.0l1.5 -0.6v2.1l-1.5 0.6zM876.4 143.7l1.5 -0.6v2.1l-1.5 0.6zM859.9 156.0l1.5 -0.6v2.1l-1.5 0.6zM865.4 153.7l1.5 -0.6v2.1l-1.5 0.6zM870.9 151.5l1.5 -0.6v2.1l-1.5 0.6zM873.7 150.3l1.5 -0.6v2.1l-1.5 0.6zM876.4 149.2l1.5 -0.6v2.1l-1.5 0.6zM862.7 160.4l1.5 -0.6v2.1l-1.5 0.6zM865.4 159.2l1.5 -0.6v2.1l-1.5 0.6zM868.2 158.1l1.5 -0.6v2.1l-1.5 0.6zM873.7 155.8l1.5 -0.6v2.1l-1.5 0.6zM876.4 154.7l1.5 -0.6v2.1l-1.5 0.6z"/>
<path fill="#264686" d="M859.9 167.0l1.5 -0.6v2.1l-1.5 0.6zM862.7 165.9l1.5 -0.6v2.1l-1.5 0.6zM865.4 164.7l1.5 -0.6v2.1l-1.5 0.6zM868.2 163.6l1.5 -0.6v2.1l-1.5 0.6zM870.9 162.5l1.5 -0.6v2.1l-1.5 0.6zM873.7 161.3l1.5 -0.6v2.1l-1.5 0.6zM876.4 160.2l1.5 -0.6v2.1l-1.5 0.6zM862.7 171.4l1.5 -0.6v2.1l-1.5 0.6zM865.4 170.2l1.5 -0.6v2.1l-1.5 0.6zM870.9 168.0l1.5 -0.6v2.1l-1.5 0.6zM873.7 166.8l1.5 -0.6v2.1l-1.5 0.6zM859.9 178.0l1.5 -0.6v2.1l-1.5 0.6zM862.7 176.9l1.5 -0.6v2.1l-1.5 0.6zM865.4 175.7l1.5 -0.6v2.1l-1.5 0.6zM870.9 173.5l1.5 -0.6v2.1l-1.5 0.6zM873.7 172.3l1.5 -0.6v2.1l-1.5 0.6zM876.4 171.2l1.5 -0.6v2.1l-1.5 0.6z"/>
<path fill="#284888" d="M859.9 183.5l1.5 -0.6v2.1l-1.5 0.6zM862.7 182.4l1.5 -0.6v2.1l-1.5 0.6zM865.4 181.2l1.5 -0.6v2.1l-1.5 0.6zM870.9 179.0l1.5 -0.6v2.1l-1.5 0.6zM876.4 176.7l1.5 -0.6v2.1l-1.5 0.6zM859.9 189.0l1.5 -0.6v2.1l-1.5 0.6zM862.7 187.9l1.5 -0.6v2.1l-1.5 0.6zM868.2 185.6l1.5 -0.6v2.1l-1.5 0.6zM873.7 183.3l1.5 -0.6v2.1l-1.5 0.6zM876.4 182.2l1.5 -0.6v2.1l-1.5 0.6zM859.9 194.5l1.5 -0.6v2.1l-1.5 0.6zM862.7 193.4l1.5 -0.6v2.1l-1.5 0.6zM865.4 192.2l1.5 -0.6v2.1l-1.5 0.6zM868.2 191.1l1.5 -0.6v2.1l-1.5 0.6zM870.9 190.0l1.5 -0.6v2.1l-1.5 0.6zM876.4 187.7l1.5 -0.6v2.1l-1.5 0.6z"/>
<path fill="#2a4a8a" d="M859.9 200.0l1.5 -0.6v2.1l-1.5 0.6zM862.7 198.9l1.5 -0.6v2.1l-1.5 0.6zM865.4 197.7l1.5 -0.6v2.1l-1.5 0.6zM868.2 196.6l1.5 -0.6v2.1l-1.5 0.6zM870.9 195.5l1.5 -0.6v2.1l-1.5 0.6zM873.7 194.3l1.5 -0.6v2.1l-1.5 0.6zM876.4 193.2l1.5 -0.6v2.1l-1.5 0.6zM859.9 205.5l1.5 -0.6v2.1l-1.5 0.6zM862.7 204.4l1.5 -0.6v2.1l-1.5 0.6zM868.2 202.1l1.5 -0.6v2.1l-1.5 0.6zM873.7 199.8l1.5 -0.6v2.1l-1.5 0.6zM876.4 198.7l1.5 -0.6v2.1l-1.5 0.6z"/>
<path fill="#7a4a60" d="M881.0 116.2l1.9 0.5v2.2l-1.9 -0.5zM892.1 124.6l1.9 0.5v2.2l-1.9 -0.5zM903.3 127.6l1.9 0.5v2.2l-1.9 -0.5zM903.3 133.1l1.9 0.5v2.2l-1.9 -0.5zM881.0 132.7l1.9 0.5v2.2l-1.9 -0.5zM888.4 134.7l1.9 0.5v2.2l-1.9 -0.5zM895.9 158.6l1.9 0.5v2.2l-1.9 -0.5zM899.6 159.6l1.9 0.5v2.2l-1.9 -0.5zM881.0 160.2l1.9 0.5v2.2l-1.9 -0.5zM884.7 166.7l1.9 0.5v2.2l-1.9 -0.5zM884.7 172.2l1.9 0.5v2.2l-1.9 -0.5zM884.7 177.7l1.9 0.5v2.2l-1.9 -0.5zM884.7 183.2l1.9 0.5v2.2l-1.9 -0.5zM892.1 190.6l1.9 0.5v2.2l-1.9 -0.5zM892.1 196.1l1.9 0.5v2.2l-1.9 -0.5zM899.6 198.1l1.9 0.5v2.2l-1.9 -0.5zM903.3 204.6l1.9 0.5v2.2l-1.9 -0.5z"/>
<path fill="#4a4668" d="M884.7 117.2l1.9 0.5v2.2l-1.9 -0.5zM899.6 121.1l1.9 0.5v2.2l-1.9 -0.5zM884.7 122.7l1.9 0.5v2.2l-1.9 -0.5zM899.6 132.1l1.9 0.5v2.2l-1.9 -0.5zM884.7 133.7l1.9 0.5v2.2l-1.9 -0.5zM903.3 138.6l1.9 0.5v2.2l-1.9 -0.5zM895.9 142.1l1.9 0.5v2.2l-1.9 -0.5zM895.9 147.6l1.9 0.5v2.2l-1.9 -0.5zM884.7 150.2l1.9 0.5v2.2l-1.9 -0.5zM899.6 170.6l1.9 0.5v2.2l-1.9 -0.5zM892.1 174.1l1.9 0.5v2.2l-1.9 -0.5zM888.4 178.7l1.9 0.5v2.2l-1.9 -0.5zM899.6 181.6l1.9 0.5v2.2l-1.9 -0.5zM903.3 182.6l1.9 0.5v2.2l-1.9 -0.5zM892.1 185.1l1.9 0.5v2.2l-1.9 -0.5zM888.4 189.7l1.9 0.5v2.2l-1.9 -0.5zM881.0 198.7l1.9 0.5v2.2l-1.9 -0.5zM884.7 199.7l1.9 0.5v2.2l-1.9 -0.5zM888.4 200.7l1.9 0.5v2.2l-1.9 -0.5zM899.6 203.6l1.9 0.5v2.2l-1.9 -0.5z"/>
<path fill="#3a3f6a" d="M895.9 120.1l1.9 0.5v2.2l-1.9 -0.5zM884.7 128.2l1.9 0.5v2.2l-1.9 -0.5zM892.1 135.6l1.9 0.5v2.2l-1.9 -0.5zM895.9 136.6l1.9 0.5v2.2l-1.9 -0.5zM888.4 145.7l1.9 0.5v2.2l-1.9 -0.5zM881.0 149.2l1.9 0.5v2.2l-1.9 -0.5zM888.4 151.2l1.9 0.5v2.2l-1.9 -0.5zM892.1 152.1l1.9 0.5v2.2l-1.9 -0.5zM903.3 160.6l1.9 0.5v2.2l-1.9 -0.5zM895.9 169.6l1.9 0.5v2.2l-1.9 -0.5zM903.3 171.6l1.9 0.5v2.2l-1.9 -0.5zM888.4 173.2l1.9 0.5v2.2l-1.9 -0.5zM895.9 186.1l1.9 0.5v2.2l-1.9 -0.5zM903.3 199.1l1.9 0.5v2.2l-1.9 -0.5z"/>
<path fill="#5a4a6a" d="M899.6 126.6l1.9 0.5v2.2l-1.9 -0.5zM881.0 127.2l1.9 0.5v2.2l-1.9 -0.5zM895.9 131.1l1.9 0.5v2.2l-1.9 -0.5zM903.3 144.1l1.9 0.5v2.2l-1.9 -0.5zM892.1 146.6l1.9 0.5v2.2l-1.9 -0.5zM899.6 154.1l1.9 0.5v2.2l-1.9 -0.5zM888.4 162.2l1.9 0.5v2.2l-1.9 -0.5zM895.9 164.1l1.9 0.5v2.2l-1.9 -0.5zM881.0 165.7l1.9 0.5v2.2l-1.9 -0.5zM892.1 168.6l1.9 0.5v2.2l-1.9 -0.5zM881.0 171.2l1.9 0.5v2.2l-1.9 -0.5zM895.9 175.1l1.9 0.5v2.2l-1.9 -0.5zM895.9 191.6l1.9 0.5v2.2l-1.9 -0.5zM903.3 193.6l1.9 0.5v2.2l-1.9 -0.5zM895.9 202.6l1.9 0.5v2.2l-1.9 -0.5z"/>
<path fill="#b5504c" d="M911.3 122.3L928.4 118.2v1.1L911.3 123.4zM931.0 118.2L947.7 121.8v1.1L931.0 119.3zM912.4 121.5h1.3v77.5h-1.3zM916.5 121.5h1.3v77.5h-1.3zM921.4 121.5h1.3v77.5h-1.3zM926.0 121.5h1.3v77.5h-1.3zM912.4 126.5L927.3 123.2v1.0L912.4 127.5zM912.4 131.9L927.3 128.6v1.0L912.4 132.9zM912.4 137.3L927.3 134.0v1.0L912.4 138.3zM912.4 142.7L927.3 139.4v1.0L912.4 143.7zM912.4 148.1L927.3 144.8v1.0L912.4 149.1zM912.4 153.5L927.3 150.2v1.0L912.4 154.5zM912.4 158.9L927.3 155.6v1.0L912.4 159.9zM912.4 164.3L927.3 161.0v1.0L912.4 165.3zM912.4 169.7L927.3 166.4v1.0L912.4 170.7zM912.4 175.1L927.3 171.8v1.0L912.4 176.1zM912.4 180.5L927.3 177.2v1.0L912.4 181.5zM912.4 185.9L927.3 182.6v1.0L912.4 186.9zM912.4 191.3L927.3 188.0v1.0L912.4 192.3zM912.4 196.7L927.3 193.4v1.0L912.4 197.7zM912.4 202.1L927.3 198.8v1.0L912.4 203.1zM912.4 207.5L927.3 204.2v1.0L912.4 208.5z"/>
<path fill="#c0473f" d="M925.2 122.5l3.2 -0.7v3.4l-3.2 0.7zM925.2 127.9l3.2 -0.7v3.4l-3.2 0.7zM925.2 133.3l3.2 -0.7v3.4l-3.2 0.7zM925.2 138.7l3.2 -0.7v3.4l-3.2 0.7zM925.2 144.1l3.2 -0.7v3.4l-3.2 0.7zM925.2 149.5l3.2 -0.7v3.4l-3.2 0.7zM925.2 154.9l3.2 -0.7v3.4l-3.2 0.7zM925.2 160.3l3.2 -0.7v3.4l-3.2 0.7zM925.2 165.7l3.2 -0.7v3.4l-3.2 0.7zM925.2 171.1l3.2 -0.7v3.4l-3.2 0.7zM925.2 176.5l3.2 -0.7v3.4l-3.2 0.7zM925.2 181.9l3.2 -0.7v3.4l-3.2 0.7zM925.2 187.3l3.2 -0.7v3.4l-3.2 0.7zM925.2 192.7l3.2 -0.7v3.4l-3.2 0.7zM925.2 198.1l3.2 -0.7v3.4l-3.2 0.7z"/>
<path fill="#b96560" d="M931.0 119.5h1.2v79.5h-1.2zM933.8 119.5h1.2v79.5h-1.2zM936.6 119.5h1.2v79.5h-1.2zM938.9 119.5h1.2v79.5h-1.2z"/>
<path fill="#b04040" d="M931.2 121.0l1.3 0.2v2.6l-1.3 -0.2zM934.2 121.5l1.3 0.2v2.6l-1.3 -0.2zM937.2 122.0l1.3 0.2v2.6l-1.3 -0.2zM937.2 127.4l1.3 0.2v2.6l-1.3 -0.2zM931.2 131.8l1.3 0.2v2.6l-1.3 -0.2zM934.2 132.3l1.3 0.2v2.6l-1.3 -0.2zM931.2 137.2l1.3 0.2v2.6l-1.3 -0.2zM934.2 137.7l1.3 0.2v2.6l-1.3 -0.2zM937.2 138.2l1.3 0.2v2.6l-1.3 -0.2zM934.2 143.1l1.3 0.2v2.6l-1.3 -0.2zM931.2 148.0l1.3 0.2v2.6l-1.3 -0.2zM934.2 148.5l1.3 0.2v2.6l-1.3 -0.2zM931.2 153.4l1.3 0.2v2.6l-1.3 -0.2zM934.2 153.9l1.3 0.2v2.6l-1.3 -0.2zM931.2 158.8l1.3 0.2v2.6l-1.3 -0.2zM937.2 165.2l1.3 0.2v2.6l-1.3 -0.2zM931.2 169.6l1.3 0.2v2.6l-1.3 -0.2zM934.2 170.1l1.3 0.2v2.6l-1.3 -0.2zM931.2 175.0l1.3 0.2v2.6l-1.3 -0.2zM937.2 176.0l1.3 0.2v2.6l-1.3 -0.2zM931.2 180.4l1.3 0.2v2.6l-1.3 -0.2zM934.2 180.9l1.3 0.2v2.6l-1.3 -0.2zM931.2 185.8l1.3 0.2v2.6l-1.3 -0.2zM934.2 186.3l1.3 0.2v2.6l-1.3 -0.2zM931.2 191.2l1.3 0.2v2.6l-1.3 -0.2zM934.2 191.7l1.3 0.2v2.6l-1.3 -0.2zM937.2 192.2l1.3 0.2v2.6l-1.3 -0.2z"/>
<path fill="#c0392b" d="M940.6 122.8l1.5 0.3v2.3l-1.5 -0.3zM943.3 123.3l1.5 0.3v2.3l-1.5 -0.3zM940.6 128.2l1.5 0.3v2.3l-1.5 -0.3zM943.3 128.8l1.5 0.3v2.3l-1.5 -0.3zM946.1 129.3l1.5 0.3v2.3l-1.5 -0.3z"/>
<path fill="#be3c2f" d="M943.3 134.2l1.5 0.3v2.3l-1.5 -0.3zM946.1 134.7l1.5 0.3v2.3l-1.5 -0.3zM940.6 139.0l1.5 0.3v2.3l-1.5 -0.3zM946.1 140.1l1.5 0.3v2.3l-1.5 -0.3zM940.6 144.4l1.5 0.3v2.3l-1.5 -0.3zM943.3 145.0l1.5 0.3v2.3l-1.5 -0.3z"/>
<path fill="#bd4033" d="M940.6 149.8l1.5 0.3v2.3l-1.5 -0.3zM943.3 150.4l1.5 0.3v2.3l-1.5 -0.3zM946.1 150.9l1.5 0.3v2.3l-1.5 -0.3zM946.1 156.3l1.5 0.3v2.3l-1.5 -0.3zM940.6 160.6l1.5 0.3v2.3l-1.5 -0.3zM943.3 161.2l1.5 0.3v2.3l-1.5 -0.3z"/>
<path fill="#bb4338" d="M940.6 166.0l1.5 0.3v2.3l-1.5 -0.3zM946.1 167.1l1.5 0.3v2.3l-1.5 -0.3zM940.6 171.4l1.5 0.3v2.3l-1.5 -0.3zM946.1 172.5l1.5 0.3v2.3l-1.5 -0.3z"/>
<path fill="#ba473c" d="M943.3 177.4l1.5 0.3v2.3l-1.5 -0.3zM946.1 177.9l1.5 0.3v2.3l-1.5 -0.3zM940.6 182.2l1.5 0.3v2.3l-1.5 -0.3zM943.3 182.8l1.5 0.3v2.3l-1.5 -0.3zM946.1 183.3l1.5 0.3v2.3l-1.5 -0.3zM943.3 188.2l1.5 0.3v2.3l-1.5 -0.3z"/>
<path fill="#b84a40" d="M940.6 193.0l1.5 0.3v2.3l-1.5 -0.3zM943.3 193.6l1.5 0.3v2.3l-1.5 -0.3zM940.6 198.4l1.5 0.3v2.3l-1.5 -0.3zM943.3 199.0l1.5 0.3v2.3l-1.5 -0.3zM946.1 199.5l1.5 0.3v2.3l-1.5 -0.3z"/>
<path fill="#e59a7e" opacity="0.90" d="M959.5 131.0h0.8v14.5h-0.8zM961.6 129.6h0.8v15.9h-0.8zM963.6 129.0h0.8v16.5h-0.8zM965.3 128.0h0.8v17.5h-0.8zM967.4 128.5h0.8v17.0h-0.8zM969.6 129.5h0.8v16.0h-0.8zM972.4 130.2h0.8v15.3h-0.8z"/>
<path fill="#f3c5b0" opacity="0.35" d="M955.0 131.5h4.5v14.0h-4.5z"/>
<path fill="#f3c5b0" opacity="0.30" d="M959.5 130.0h13.0v15.5h-13.0z"/>
<path fill="#0f2f6a" d="M612.6 125.0l2.4 -0.8v2.6l-2.4 0.8zM617.2 123.5l2.4 -0.8v2.6l-2.4 0.8zM621.7 122.0l2.4 -0.8v2.6l-2.4 0.8zM630.9 119.1l2.4 -0.8v2.6l-2.4 0.8zM635.5 117.6l2.4 -0.8v2.6l-2.4 0.8zM640.0 116.1l2.4 -0.8v2.6l-2.4 0.8zM612.6 131.7l2.4 -0.8v2.6l-2.4 0.8zM617.2 130.2l2.4 -0.8v2.6l-2.4 0.8zM621.7 128.7l2.4 -0.8v2.6l-2.4 0.8zM626.3 127.3l2.4 -0.8v2.6l-2.4 0.8zM630.9 125.8l2.4 -0.8v2.6l-2.4 0.8zM640.0 122.8l2.4 -0.8v2.6l-2.4 0.8zM612.6 138.4l2.4 -0.8v2.6l-2.4 0.8zM617.2 136.9l2.4 -0.8v2.6l-2.4 0.8zM621.7 135.4l2.4 -0.8v2.6l-2.4 0.8zM626.3 134.0l2.4 -0.8v2.6l-2.4 0.8zM630.9 132.5l2.4 -0.8v2.6l-2.4 0.8zM635.5 131.0l2.4 -0.8v2.6l-2.4 0.8zM640.0 129.5l2.4 -0.8v2.6l-2.4 0.8zM617.2 143.6l2.4 -0.8v2.6l-2.4 0.8zM626.3 140.7l2.4 -0.8v2.6l-2.4 0.8zM630.9 139.2l2.4 -0.8v2.6l-2.4 0.8zM635.5 137.7l2.4 -0.8v2.6l-2.4 0.8zM640.0 136.2l2.4 -0.8v2.6l-2.4 0.8zM617.2 150.3l2.4 -0.8v2.6l-2.4 0.8zM621.7 148.8l2.4 -0.8v2.6l-2.4 0.8zM626.3 147.4l2.4 -0.8v2.6l-2.4 0.8zM630.9 145.9l2.4 -0.8v2.6l-2.4 0.8zM635.5 144.4l2.4 -0.8v2.6l-2.4 0.8zM640.0 142.9l2.4 -0.8v2.6l-2.4 0.8zM617.2 157.0l2.4 -0.8v2.6l-2.4 0.8zM621.7 155.5l2.4 -0.8v2.6l-2.4 0.8zM630.9 152.6l2.4 -0.8v2.6l-2.4 0.8zM635.5 151.1l2.4 -0.8v2.6l-2.4 0.8zM612.6 165.2l2.4 -0.8v2.6l-2.4 0.8zM621.7 162.2l2.4 -0.8v2.6l-2.4 0.8zM626.3 160.8l2.4 -0.8v2.6l-2.4 0.8zM630.9 159.3l2.4 -0.8v2.6l-2.4 0.8zM640.0 156.3l2.4 -0.8v2.6l-2.4 0.8zM612.6 171.9l2.4 -0.8v2.6l-2.4 0.8zM617.2 170.4l2.4 -0.8v2.6l-2.4 0.8zM621.7 168.9l2.4 -0.8v2.6l-2.4 0.8zM626.3 167.5l2.4 -0.8v2.6l-2.4 0.8zM630.9 166.0l2.4 -0.8v2.6l-2.4 0.8zM635.5 164.5l2.4 -0.8v2.6l-2.4 0.8zM640.0 163.0l2.4 -0.8v2.6l-2.4 0.8zM612.6 178.6l2.4 -0.8v2.6l-2.4 0.8zM621.7 175.6l2.4 -0.8v2.6l-2.4 0.8zM630.9 172.7l2.4 -0.8v2.6l-2.4 0.8zM640.0 169.7l2.4 -0.8v2.6l-2.4 0.8zM635.5 177.9l2.4 -0.8v2.6l-2.4 0.8zM640.0 176.4l2.4 -0.8v2.6l-2.4 0.8zM612.6 192.0l2.4 -0.8v2.6l-2.4 0.8zM630.9 186.1l2.4 -0.8v2.6l-2.4 0.8zM635.5 184.6l2.4 -0.8v2.6l-2.4 0.8zM640.0 183.1l2.4 -0.8v2.6l-2.4 0.8zM617.2 197.2l2.4 -0.8v2.6l-2.4 0.8zM635.5 191.3l2.4 -0.8v2.6l-2.4 0.8zM640.0 189.8l2.4 -0.8v2.6l-2.4 0.8zM612.6 205.4l2.4 -0.8v2.6l-2.4 0.8zM617.2 203.9l2.4 -0.8v2.6l-2.4 0.8zM621.7 202.4l2.4 -0.8v2.6l-2.4 0.8zM630.9 199.5l2.4 -0.8v2.6l-2.4 0.8zM640.0 196.5l2.4 -0.8v2.6l-2.4 0.8zM648.0 117.0l2.1 0.8v2.8l-2.1 -0.8zM652.3 118.5l2.1 0.8v2.8l-2.1 -0.8zM656.6 120.1l2.1 0.8v2.8l-2.1 -0.8zM660.9 121.7l2.1 0.8v2.8l-2.1 -0.8zM665.2 123.2l2.1 0.8v2.8l-2.1 -0.8zM648.0 123.7l2.1 0.8v2.8l-2.1 -0.8zM652.3 125.2l2.1 0.8v2.8l-2.1 -0.8zM656.6 126.8l2.1 0.8v2.8l-2.1 -0.8zM660.9 128.3l2.1 0.8v2.8l-2.1 -0.8zM665.2 129.9l2.1 0.8v2.8l-2.1 -0.8zM669.5 131.4l2.1 0.8v2.8l-2.1 -0.8zM648.0 130.4l2.1 0.8v2.8l-2.1 -0.8zM660.9 135.1l2.1 0.8v2.8l-2.1 -0.8zM665.2 136.6l2.1 0.8v2.8l-2.1 -0.8zM648.0 137.1l2.1 0.8v2.8l-2.1 -0.8zM652.3 138.7l2.1 0.8v2.8l-2.1 -0.8zM656.6 140.2l2.1 0.8v2.8l-2.1 -0.8zM660.9 141.8l2.1 0.8v2.8l-2.1 -0.8zM665.2 143.3l2.1 0.8v2.8l-2.1 -0.8zM669.5 144.8l2.1 0.8v2.8l-2.1 -0.8zM648.0 143.8l2.1 0.8v2.8l-2.1 -0.8zM652.3 145.3l2.1 0.8v2.8l-2.1 -0.8zM660.9 148.4l2.1 0.8v2.8l-2.1 -0.8zM665.2 150.0l2.1 0.8v2.8l-2.1 -0.8zM669.5 151.5l2.1 0.8v2.8l-2.1 -0.8zM652.3 152.0l2.1 0.8v2.8l-2.1 -0.8zM656.6 153.6l2.1 0.8v2.8l-2.1 -0.8zM669.5 158.2l2.1 0.8v2.8l-2.1 -0.8zM648.0 157.2l2.1 0.8v2.8l-2.1 -0.8zM652.3 158.7l2.1 0.8v2.8l-2.1 -0.8zM669.5 164.9l2.1 0.8v2.8l-2.1 -0.8zM648.0 163.9l2.1 0.8v2.8l-2.1 -0.8zM656.6 167.0l2.1 0.8v2.8l-2.1 -0.8zM660.9 168.5l2.1 0.8v2.8l-2.1 -0.8zM669.5 171.6l2.1 0.8v2.8l-2.1 -0.8zM648.0 170.6l2.1 0.8v2.8l-2.1 -0.8zM652.3 172.1l2.1 0.8v2.8l-2.1 -0.8zM656.6 173.7l2.1 0.8v2.8l-2.1 -0.8zM660.9 175.2l2.1 0.8v2.8l-2.1 -0.8zM665.2 176.8l2.1 0.8v2.8l-2.1 -0.8zM669.5 178.3l2.1 0.8v2.8l-2.1 -0.8zM652.3 178.8l2.1 0.8v2.8l-2.1 -0.8zM656.6 180.4l2.1 0.8v2.8l-2.1 -0.8zM660.9 181.9l2.1 0.8v2.8l-2.1 -0.8zM665.2 183.5l2.1 0.8v2.8l-2.1 -0.8zM669.5 185.0l2.1 0.8v2.8l-2.1 -0.8zM648.0 184.0l2.1 0.8v2.8l-2.1 -0.8zM652.3 185.5l2.1 0.8v2.8l-2.1 -0.8zM665.2 190.2l2.1 0.8v2.8l-2.1 -0.8zM648.0 190.7l2.1 0.8v2.8l-2.1 -0.8zM656.6 193.8l2.1 0.8v2.8l-2.1 -0.8zM660.9 195.3l2.1 0.8v2.8l-2.1 -0.8zM665.2 196.9l2.1 0.8v2.8l-2.1 -0.8zM669.5 198.4l2.1 0.8v2.8l-2.1 -0.8zM652.3 198.9l2.1 0.8v2.8l-2.1 -0.8zM656.6 200.5l2.1 0.8v2.8l-2.1 -0.8zM660.9 202.0l2.1 0.8v2.8l-2.1 -0.8zM665.2 203.6l2.1 0.8v2.8l-2.1 -0.8zM669.5 205.1l2.1 0.8v2.8l-2.1 -0.8z"/>
<path fill="#c6c2be" d="M626.3 120.6l2.4 -0.8v2.6l-2.4 0.8zM635.5 124.3l2.4 -0.8v2.6l-2.4 0.8zM612.6 145.1l2.4 -0.8v2.6l-2.4 0.8zM621.7 142.1l2.4 -0.8v2.6l-2.4 0.8zM612.6 151.8l2.4 -0.8v2.6l-2.4 0.8zM612.6 158.5l2.4 -0.8v2.6l-2.4 0.8zM626.3 154.1l2.4 -0.8v2.6l-2.4 0.8zM640.0 149.6l2.4 -0.8v2.6l-2.4 0.8zM617.2 163.7l2.4 -0.8v2.6l-2.4 0.8zM635.5 157.8l2.4 -0.8v2.6l-2.4 0.8zM617.2 177.1l2.4 -0.8v2.6l-2.4 0.8zM626.3 174.2l2.4 -0.8v2.6l-2.4 0.8zM635.5 171.2l2.4 -0.8v2.6l-2.4 0.8zM612.6 185.3l2.4 -0.8v2.6l-2.4 0.8zM617.2 183.8l2.4 -0.8v2.6l-2.4 0.8zM621.7 182.3l2.4 -0.8v2.6l-2.4 0.8zM626.3 180.9l2.4 -0.8v2.6l-2.4 0.8zM630.9 179.4l2.4 -0.8v2.6l-2.4 0.8zM617.2 190.5l2.4 -0.8v2.6l-2.4 0.8zM621.7 189.0l2.4 -0.8v2.6l-2.4 0.8zM626.3 187.6l2.4 -0.8v2.6l-2.4 0.8zM612.6 198.7l2.4 -0.8v2.6l-2.4 0.8zM621.7 195.7l2.4 -0.8v2.6l-2.4 0.8zM626.3 194.3l2.4 -0.8v2.6l-2.4 0.8zM630.9 192.8l2.4 -0.8v2.6l-2.4 0.8zM626.3 201.0l2.4 -0.8v2.6l-2.4 0.8zM635.5 198.0l2.4 -0.8v2.6l-2.4 0.8zM669.5 124.8l2.1 0.8v2.8l-2.1 -0.8zM652.3 132.0l2.1 0.8v2.8l-2.1 -0.8zM656.6 133.5l2.1 0.8v2.8l-2.1 -0.8zM669.5 138.2l2.1 0.8v2.8l-2.1 -0.8zM656.6 146.9l2.1 0.8v2.8l-2.1 -0.8zM648.0 150.5l2.1 0.8v2.8l-2.1 -0.8zM660.9 155.1l2.1 0.8v2.8l-2.1 -0.8zM665.2 156.7l2.1 0.8v2.8l-2.1 -0.8zM656.6 160.3l2.1 0.8v2.8l-2.1 -0.8zM660.9 161.8l2.1 0.8v2.8l-2.1 -0.8zM665.2 163.4l2.1 0.8v2.8l-2.1 -0.8zM652.3 165.4l2.1 0.8v2.8l-2.1 -0.8zM665.2 170.1l2.1 0.8v2.8l-2.1 -0.8zM648.0 177.3l2.1 0.8v2.8l-2.1 -0.8zM656.6 187.1l2.1 0.8v2.8l-2.1 -0.8zM660.9 188.6l2.1 0.8v2.8l-2.1 -0.8zM669.5 191.7l2.1 0.8v2.8l-2.1 -0.8zM652.3 192.2l2.1 0.8v2.8l-2.1 -0.8zM648.0 197.4l2.1 0.8v2.8l-2.1 -0.8z"/>
<path fill="#2c64a8" opacity="0.13" d="M560.0 162.0L586.0 157.0L607.0 161.0V199H560.0zM754.0 151.0L768.0 146.0L789.0 150.0V199H754.0zM733.0 166.0L741.0 161.0L748.0 165.0V199H733.0zM780.0 154.0L784.0 149.0L792.0 153.0V199H780.0zM425.0 181.0L437.0 176.0L455.0 180.0V199H425.0zM676.0 196.0L692.0 191.0L710.0 195.0V199H676.0z"/>
<path fill="#2c64a8" opacity="0.08" d="M560.0 162.0L586.0 157.0V199H560.0zM754.0 151.0L768.0 146.0V199H754.0zM733.0 166.0L741.0 161.0V199H733.0zM780.0 154.0L784.0 149.0V199H780.0zM425.0 181.0L437.0 176.0V199H425.0zM676.0 196.0L692.0 191.0V199H676.0z"/>
<path fill="#2c64a8" opacity="0.50" d="M560.0 160.0l2.3 -0.1v2.6l-2.3 0.1zM564.2 159.8l2.3 -0.1v2.6l-2.3 0.1zM568.3 159.5l2.3 -0.1v2.6l-2.3 0.1zM572.5 159.2l2.3 -0.1v2.6l-2.3 0.1zM576.7 159.0l2.3 -0.1v2.6l-2.3 0.1zM580.8 158.8l2.3 -0.1v2.6l-2.3 0.1zM560.0 165.6l2.3 -0.1v2.6l-2.3 0.1zM564.2 165.3l2.3 -0.1v2.6l-2.3 0.1zM568.3 165.1l2.3 -0.1v2.6l-2.3 0.1zM572.5 164.8l2.3 -0.1v2.6l-2.3 0.1zM576.7 164.6l2.3 -0.1v2.6l-2.3 0.1zM580.8 164.3l2.3 -0.1v2.6l-2.3 0.1zM560.0 171.2l2.3 -0.1v2.6l-2.3 0.1zM564.2 170.9l2.3 -0.1v2.6l-2.3 0.1zM568.3 170.7l2.3 -0.1v2.6l-2.3 0.1zM572.5 170.4l2.3 -0.1v2.6l-2.3 0.1zM576.7 170.2l2.3 -0.1v2.6l-2.3 0.1zM580.8 169.9l2.3 -0.1v2.6l-2.3 0.1zM560.0 176.8l2.3 -0.1v2.6l-2.3 0.1zM564.2 176.5l2.3 -0.1v2.6l-2.3 0.1zM568.3 176.3l2.3 -0.1v2.6l-2.3 0.1zM572.5 176.0l2.3 -0.1v2.6l-2.3 0.1zM576.7 175.8l2.3 -0.1v2.6l-2.3 0.1zM580.8 175.5l2.3 -0.1v2.6l-2.3 0.1zM560.0 182.4l2.3 -0.1v2.6l-2.3 0.1zM564.2 182.1l2.3 -0.1v2.6l-2.3 0.1zM568.3 181.9l2.3 -0.1v2.6l-2.3 0.1zM572.5 181.6l2.3 -0.1v2.6l-2.3 0.1zM576.7 181.4l2.3 -0.1v2.6l-2.3 0.1zM580.8 181.1l2.3 -0.1v2.6l-2.3 0.1zM560.0 188.0l2.3 -0.1v2.6l-2.3 0.1zM564.2 187.7l2.3 -0.1v2.6l-2.3 0.1zM568.3 187.5l2.3 -0.1v2.6l-2.3 0.1zM572.5 187.2l2.3 -0.1v2.6l-2.3 0.1zM576.7 187.0l2.3 -0.1v2.6l-2.3 0.1zM580.8 186.7l2.3 -0.1v2.6l-2.3 0.1zM560.0 193.6l2.3 -0.1v2.6l-2.3 0.1zM564.2 193.3l2.3 -0.1v2.6l-2.3 0.1zM568.3 193.1l2.3 -0.1v2.6l-2.3 0.1zM572.5 192.8l2.3 -0.1v2.6l-2.3 0.1zM576.7 192.6l2.3 -0.1v2.6l-2.3 0.1zM580.8 192.3l2.3 -0.1v2.6l-2.3 0.1zM587.0 158.0l1.8 0.1v2.6l-1.8 -0.1zM590.3 158.2l1.8 0.1v2.6l-1.8 -0.1zM593.7 158.5l1.8 0.1v2.6l-1.8 -0.1zM597.0 158.8l1.8 0.1v2.6l-1.8 -0.1zM600.3 159.0l1.8 0.1v2.6l-1.8 -0.1zM603.7 159.2l1.8 0.1v2.6l-1.8 -0.1zM587.0 163.6l1.8 0.1v2.6l-1.8 -0.1zM590.3 163.8l1.8 0.1v2.6l-1.8 -0.1zM593.7 164.1l1.8 0.1v2.6l-1.8 -0.1zM597.0 164.3l1.8 0.1v2.6l-1.8 -0.1zM600.3 164.6l1.8 0.1v2.6l-1.8 -0.1zM603.7 164.8l1.8 0.1v2.6l-1.8 -0.1zM587.0 169.2l1.8 0.1v2.6l-1.8 -0.1zM590.3 169.4l1.8 0.1v2.6l-1.8 -0.1zM593.7 169.7l1.8 0.1v2.6l-1.8 -0.1zM597.0 169.9l1.8 0.1v2.6l-1.8 -0.1zM600.3 170.2l1.8 0.1v2.6l-1.8 -0.1zM603.7 170.4l1.8 0.1v2.6l-1.8 -0.1zM587.0 174.8l1.8 0.1v2.6l-1.8 -0.1zM590.3 175.0l1.8 0.1v2.6l-1.8 -0.1zM593.7 175.3l1.8 0.1v2.6l-1.8 -0.1zM597.0 175.5l1.8 0.1v2.6l-1.8 -0.1zM600.3 175.8l1.8 0.1v2.6l-1.8 -0.1zM603.7 176.0l1.8 0.1v2.6l-1.8 -0.1zM587.0 180.4l1.8 0.1v2.6l-1.8 -0.1zM590.3 180.6l1.8 0.1v2.6l-1.8 -0.1zM593.7 180.9l1.8 0.1v2.6l-1.8 -0.1zM597.0 181.1l1.8 0.1v2.6l-1.8 -0.1zM600.3 181.4l1.8 0.1v2.6l-1.8 -0.1zM603.7 181.6l1.8 0.1v2.6l-1.8 -0.1zM587.0 186.0l1.8 0.1v2.6l-1.8 -0.1zM590.3 186.2l1.8 0.1v2.6l-1.8 -0.1zM593.7 186.5l1.8 0.1v2.6l-1.8 -0.1zM597.0 186.7l1.8 0.1v2.6l-1.8 -0.1zM600.3 187.0l1.8 0.1v2.6l-1.8 -0.1zM603.7 187.2l1.8 0.1v2.6l-1.8 -0.1zM587.0 191.6l1.8 0.1v2.6l-1.8 -0.1zM590.3 191.8l1.8 0.1v2.6l-1.8 -0.1zM593.7 192.1l1.8 0.1v2.6l-1.8 -0.1zM597.0 192.3l1.8 0.1v2.6l-1.8 -0.1zM600.3 192.6l1.8 0.1v2.6l-1.8 -0.1zM603.7 192.8l1.8 0.1v2.6l-1.8 -0.1zM587.0 197.2l1.8 0.1v2.6l-1.8 -0.1zM590.3 197.4l1.8 0.1v2.6l-1.8 -0.1zM593.7 197.7l1.8 0.1v2.6l-1.8 -0.1zM597.0 197.9l1.8 0.1v2.6l-1.8 -0.1zM600.3 198.2l1.8 0.1v2.6l-1.8 -0.1zM603.7 198.4l1.8 0.1v2.6l-1.8 -0.1z"/>
<path fill="#2c64a8" opacity="0.30" d="M560.0 153.5h26.0v0.8h-26.0zM560.0 155.5h26.0v0.8h-26.0zM586.0 153.5h21.0v0.8h-21.0zM586.0 155.5h21.0v0.8h-21.0z"/>
<path fill="#2c64a8" opacity="0.65" d="M754.0 149.0l1.8 -0.1v2.2l-1.8 0.1zM757.2 148.8l1.8 -0.1v2.2l-1.8 0.1zM760.5 148.5l1.8 -0.1v2.2l-1.8 0.1zM763.8 148.2l1.8 -0.1v2.2l-1.8 0.1zM754.0 153.6l1.8 -0.1v2.2l-1.8 0.1zM757.2 153.3l1.8 -0.1v2.2l-1.8 0.1zM760.5 153.1l1.8 -0.1v2.2l-1.8 0.1zM763.8 152.8l1.8 -0.1v2.2l-1.8 0.1zM754.0 158.2l1.8 -0.1v2.2l-1.8 0.1zM757.2 157.9l1.8 -0.1v2.2l-1.8 0.1zM760.5 157.7l1.8 -0.1v2.2l-1.8 0.1zM763.8 157.4l1.8 -0.1v2.2l-1.8 0.1zM754.0 162.8l1.8 -0.1v2.2l-1.8 0.1zM757.2 162.5l1.8 -0.1v2.2l-1.8 0.1zM760.5 162.3l1.8 -0.1v2.2l-1.8 0.1zM763.8 162.0l1.8 -0.1v2.2l-1.8 0.1zM754.0 167.4l1.8 -0.1v2.2l-1.8 0.1zM757.2 167.1l1.8 -0.1v2.2l-1.8 0.1zM760.5 166.9l1.8 -0.1v2.2l-1.8 0.1zM763.8 166.6l1.8 -0.1v2.2l-1.8 0.1zM754.0 172.0l1.8 -0.1v2.2l-1.8 0.1zM757.2 171.7l1.8 -0.1v2.2l-1.8 0.1zM760.5 171.5l1.8 -0.1v2.2l-1.8 0.1zM763.8 171.2l1.8 -0.1v2.2l-1.8 0.1zM754.0 176.6l1.8 -0.1v2.2l-1.8 0.1zM757.2 176.3l1.8 -0.1v2.2l-1.8 0.1zM760.5 176.1l1.8 -0.1v2.2l-1.8 0.1zM763.8 175.8l1.8 -0.1v2.2l-1.8 0.1zM754.0 181.2l1.8 -0.1v2.2l-1.8 0.1zM757.2 180.9l1.8 -0.1v2.2l-1.8 0.1zM760.5 180.7l1.8 -0.1v2.2l-1.8 0.1zM763.8 180.4l1.8 -0.1v2.2l-1.8 0.1zM754.0 185.8l1.8 -0.1v2.2l-1.8 0.1zM757.2 185.5l1.8 -0.1v2.2l-1.8 0.1zM760.5 185.3l1.8 -0.1v2.2l-1.8 0.1zM763.8 185.0l1.8 -0.1v2.2l-1.8 0.1zM754.0 190.4l1.8 -0.1v2.2l-1.8 0.1zM757.2 190.1l1.8 -0.1v2.2l-1.8 0.1zM760.5 189.9l1.8 -0.1v2.2l-1.8 0.1zM763.8 189.6l1.8 -0.1v2.2l-1.8 0.1zM754.0 195.0l1.8 -0.1v2.2l-1.8 0.1zM757.2 194.7l1.8 -0.1v2.2l-1.8 0.1zM760.5 194.5l1.8 -0.1v2.2l-1.8 0.1zM763.8 194.2l1.8 -0.1v2.2l-1.8 0.1zM769.0 147.0l1.8 0.1v2.2l-1.8 -0.1zM772.3 147.2l1.8 0.1v2.2l-1.8 -0.1zM775.7 147.5l1.8 0.1v2.2l-1.8 -0.1zM779.0 147.8l1.8 0.1v2.2l-1.8 -0.1zM782.3 148.0l1.8 0.1v2.2l-1.8 -0.1zM785.7 148.2l1.8 0.1v2.2l-1.8 -0.1zM769.0 151.6l1.8 0.1v2.2l-1.8 -0.1zM772.3 151.8l1.8 0.1v2.2l-1.8 -0.1zM775.7 152.1l1.8 0.1v2.2l-1.8 -0.1zM779.0 152.3l1.8 0.1v2.2l-1.8 -0.1zM782.3 152.6l1.8 0.1v2.2l-1.8 -0.1zM785.7 152.8l1.8 0.1v2.2l-1.8 -0.1zM769.0 156.2l1.8 0.1v2.2l-1.8 -0.1zM772.3 156.4l1.8 0.1v2.2l-1.8 -0.1zM775.7 156.7l1.8 0.1v2.2l-1.8 -0.1zM779.0 156.9l1.8 0.1v2.2l-1.8 -0.1zM782.3 157.2l1.8 0.1v2.2l-1.8 -0.1zM785.7 157.4l1.8 0.1v2.2l-1.8 -0.1zM769.0 160.8l1.8 0.1v2.2l-1.8 -0.1zM772.3 161.0l1.8 0.1v2.2l-1.8 -0.1zM775.7 161.3l1.8 0.1v2.2l-1.8 -0.1zM779.0 161.5l1.8 0.1v2.2l-1.8 -0.1zM782.3 161.8l1.8 0.1v2.2l-1.8 -0.1zM785.7 162.0l1.8 0.1v2.2l-1.8 -0.1zM769.0 165.4l1.8 0.1v2.2l-1.8 -0.1zM772.3 165.6l1.8 0.1v2.2l-1.8 -0.1zM775.7 165.9l1.8 0.1v2.2l-1.8 -0.1zM779.0 166.1l1.8 0.1v2.2l-1.8 -0.1zM782.3 166.4l1.8 0.1v2.2l-1.8 -0.1zM785.7 166.6l1.8 0.1v2.2l-1.8 -0.1zM769.0 170.0l1.8 0.1v2.2l-1.8 -0.1zM772.3 170.2l1.8 0.1v2.2l-1.8 -0.1zM775.7 170.5l1.8 0.1v2.2l-1.8 -0.1zM779.0 170.7l1.8 0.1v2.2l-1.8 -0.1zM782.3 171.0l1.8 0.1v2.2l-1.8 -0.1zM785.7 171.2l1.8 0.1v2.2l-1.8 -0.1zM769.0 174.6l1.8 0.1v2.2l-1.8 -0.1zM772.3 174.8l1.8 0.1v2.2l-1.8 -0.1zM775.7 175.1l1.8 0.1v2.2l-1.8 -0.1zM779.0 175.3l1.8 0.1v2.2l-1.8 -0.1zM782.3 175.6l1.8 0.1v2.2l-1.8 -0.1zM785.7 175.8l1.8 0.1v2.2l-1.8 -0.1zM769.0 179.2l1.8 0.1v2.2l-1.8 -0.1zM772.3 179.4l1.8 0.1v2.2l-1.8 -0.1zM775.7 179.7l1.8 0.1v2.2l-1.8 -0.1zM779.0 179.9l1.8 0.1v2.2l-1.8 -0.1zM782.3 180.2l1.8 0.1v2.2l-1.8 -0.1zM785.7 180.4l1.8 0.1v2.2l-1.8 -0.1zM769.0 183.8l1.8 0.1v2.2l-1.8 -0.1zM772.3 184.0l1.8 0.1v2.2l-1.8 -0.1zM775.7 184.3l1.8 0.1v2.2l-1.8 -0.1zM779.0 184.5l1.8 0.1v2.2l-1.8 -0.1zM782.3 184.8l1.8 0.1v2.2l-1.8 -0.1zM785.7 185.0l1.8 0.1v2.2l-1.8 -0.1zM769.0 188.4l1.8 0.1v2.2l-1.8 -0.1zM772.3 188.6l1.8 0.1v2.2l-1.8 -0.1zM775.7 188.9l1.8 0.1v2.2l-1.8 -0.1zM779.0 189.1l1.8 0.1v2.2l-1.8 -0.1zM782.3 189.4l1.8 0.1v2.2l-1.8 -0.1zM785.7 189.6l1.8 0.1v2.2l-1.8 -0.1zM769.0 193.0l1.8 0.1v2.2l-1.8 -0.1zM772.3 193.2l1.8 0.1v2.2l-1.8 -0.1zM775.7 193.5l1.8 0.1v2.2l-1.8 -0.1zM779.0 193.7l1.8 0.1v2.2l-1.8 -0.1zM782.3 194.0l1.8 0.1v2.2l-1.8 -0.1zM785.7 194.2l1.8 0.1v2.2l-1.8 -0.1zM769.0 197.6l1.8 0.1v2.2l-1.8 -0.1zM772.3 197.8l1.8 0.1v2.2l-1.8 -0.1zM775.7 198.1l1.8 0.1v2.2l-1.8 -0.1zM779.0 198.3l1.8 0.1v2.2l-1.8 -0.1zM782.3 198.6l1.8 0.1v2.2l-1.8 -0.1zM785.7 198.8l1.8 0.1v2.2l-1.8 -0.1zM780.0 152.0l1.7 -0.1v2.6l-1.7 0.1zM780.0 157.6l1.7 -0.1v2.6l-1.7 0.1zM780.0 163.2l1.7 -0.1v2.6l-1.7 0.1zM780.0 168.8l1.7 -0.1v2.6l-1.7 0.1zM780.0 174.4l1.7 -0.1v2.6l-1.7 0.1zM780.0 180.0l1.7 -0.1v2.6l-1.7 0.1zM780.0 185.6l1.7 -0.1v2.6l-1.7 0.1zM780.0 191.2l1.7 -0.1v2.6l-1.7 0.1zM780.0 196.8l1.7 -0.1v2.6l-1.7 0.1zM785.0 150.0l1.9 0.1v2.6l-1.9 -0.1zM788.5 150.2l1.9 0.1v2.6l-1.9 -0.1zM785.0 155.6l1.9 0.1v2.6l-1.9 -0.1zM788.5 155.8l1.9 0.1v2.6l-1.9 -0.1zM785.0 161.2l1.9 0.1v2.6l-1.9 -0.1zM788.5 161.4l1.9 0.1v2.6l-1.9 -0.1zM785.0 166.8l1.9 0.1v2.6l-1.9 -0.1zM788.5 167.0l1.9 0.1v2.6l-1.9 -0.1zM785.0 172.4l1.9 0.1v2.6l-1.9 -0.1zM788.5 172.6l1.9 0.1v2.6l-1.9 -0.1zM785.0 178.0l1.9 0.1v2.6l-1.9 -0.1zM788.5 178.2l1.9 0.1v2.6l-1.9 -0.1zM785.0 183.6l1.9 0.1v2.6l-1.9 -0.1zM788.5 183.8l1.9 0.1v2.6l-1.9 -0.1zM785.0 189.2l1.9 0.1v2.6l-1.9 -0.1zM788.5 189.4l1.9 0.1v2.6l-1.9 -0.1zM785.0 194.8l1.9 0.1v2.6l-1.9 -0.1zM788.5 195.0l1.9 0.1v2.6l-1.9 -0.1z"/>
<path fill="#2c64a8" opacity="0.55" d="M733.0 164.0l1.9 -0.1v2.2l-1.9 0.1zM736.5 163.8l1.9 -0.1v2.2l-1.9 0.1zM733.0 168.6l1.9 -0.1v2.2l-1.9 0.1zM736.5 168.3l1.9 -0.1v2.2l-1.9 0.1zM733.0 173.2l1.9 -0.1v2.2l-1.9 0.1zM736.5 172.9l1.9 -0.1v2.2l-1.9 0.1zM733.0 177.8l1.9 -0.1v2.2l-1.9 0.1zM736.5 177.5l1.9 -0.1v2.2l-1.9 0.1zM733.0 182.4l1.9 -0.1v2.2l-1.9 0.1zM736.5 182.1l1.9 -0.1v2.2l-1.9 0.1zM733.0 187.0l1.9 -0.1v2.2l-1.9 0.1zM736.5 186.7l1.9 -0.1v2.2l-1.9 0.1zM733.0 191.6l1.9 -0.1v2.2l-1.9 0.1zM736.5 191.3l1.9 -0.1v2.2l-1.9 0.1zM733.0 196.2l1.9 -0.1v2.2l-1.9 0.1zM736.5 195.9l1.9 -0.1v2.2l-1.9 0.1zM742.0 162.0l1.7 0.1v2.2l-1.7 -0.1zM745.0 162.2l1.7 0.1v2.2l-1.7 -0.1zM742.0 166.6l1.7 0.1v2.2l-1.7 -0.1zM745.0 166.8l1.7 0.1v2.2l-1.7 -0.1zM742.0 171.2l1.7 0.1v2.2l-1.7 -0.1zM745.0 171.4l1.7 0.1v2.2l-1.7 -0.1zM742.0 175.8l1.7 0.1v2.2l-1.7 -0.1zM745.0 176.0l1.7 0.1v2.2l-1.7 -0.1zM742.0 180.4l1.7 0.1v2.2l-1.7 -0.1zM745.0 180.6l1.7 0.1v2.2l-1.7 -0.1zM742.0 185.0l1.7 0.1v2.2l-1.7 -0.1zM745.0 185.2l1.7 0.1v2.2l-1.7 -0.1zM742.0 189.6l1.7 0.1v2.2l-1.7 -0.1zM745.0 189.8l1.7 0.1v2.2l-1.7 -0.1zM742.0 194.2l1.7 0.1v2.2l-1.7 -0.1zM745.0 194.4l1.7 0.1v2.2l-1.7 -0.1zM742.0 198.8l1.7 0.1v2.2l-1.7 -0.1zM745.0 199.0l1.7 0.1v2.2l-1.7 -0.1zM966.3 149.0h0.9v50.0h-0.9zM968.6 149.0h0.9v50.0h-0.9zM971.3 149.0h0.9v50.0h-0.9zM973.6 149.0h0.9v50.0h-0.9zM976.0 149.0h0.9v50.0h-0.9zM676.0 194.0l2.1 -0.1v1.8l-2.1 0.1zM679.8 193.8l2.1 -0.1v1.8l-2.1 0.1zM683.5 193.5l2.1 -0.1v1.8l-2.1 0.1zM687.2 193.2l2.1 -0.1v1.8l-2.1 0.1zM676.0 198.0l2.1 -0.1v1.8l-2.1 0.1zM679.8 197.8l2.1 -0.1v1.8l-2.1 0.1zM683.5 197.5l2.1 -0.1v1.8l-2.1 0.1zM687.2 197.2l2.1 -0.1v1.8l-2.1 0.1zM693.0 192.0l2.3 0.1v1.8l-2.3 -0.1zM697.2 192.2l2.3 0.1v1.8l-2.3 -0.1zM701.5 192.5l2.3 0.1v1.8l-2.3 -0.1zM705.8 192.8l2.3 0.1v1.8l-2.3 -0.1zM693.0 196.0l2.3 0.1v1.8l-2.3 -0.1zM697.2 196.2l2.3 0.1v1.8l-2.3 -0.1zM701.5 196.5l2.3 0.1v1.8l-2.3 -0.1zM705.8 196.8l2.3 0.1v1.8l-2.3 -0.1z"/>
<path fill="#2c64a8" opacity="0.10" d="M985.5 149L997 145.5L1011 149V199H985.5zM953.5 149H977.5V199H953.5zM529 164L558 166V199H529z"/>
<path fill="#2c64a8" opacity="0.42" d="M986.0 151.5L996.0 148.6v1.3L986.0 152.8zM998.0 148.6L1010.5 151.5v1.3L998.0 149.9zM986.0 155.3L996.0 152.4v1.3L986.0 156.7zM998.0 152.4L1010.5 155.3v1.3L998.0 153.8zM986.0 159.2L996.0 156.3v1.3L986.0 160.5zM998.0 156.3L1010.5 159.2v1.3L998.0 157.6zM986.0 163.1L996.0 160.2v1.3L986.0 164.4zM998.0 160.2L1010.5 163.1v1.3L998.0 161.5zM986.0 166.9L996.0 164.0v1.3L986.0 168.2zM998.0 164.0L1010.5 166.9v1.3L998.0 165.3zM986.0 170.8L996.0 167.8v1.3L986.0 172.1zM998.0 167.8L1010.5 170.8v1.3L998.0 169.2zM986.0 174.6L996.0 171.7v1.3L986.0 175.9zM998.0 171.7L1010.5 174.6v1.3L998.0 173.0zM986.0 178.4L996.0 175.5v1.3L986.0 179.8zM998.0 175.5L1010.5 178.4v1.3L998.0 176.8zM986.0 182.3L996.0 179.4v1.3L986.0 183.6zM998.0 179.4L1010.5 182.3v1.3L998.0 180.7zM986.0 186.2L996.0 183.2v1.3L986.0 187.5zM998.0 183.2L1010.5 186.2v1.3L998.0 184.6zM986.0 190.0L996.0 187.1v1.3L986.0 191.3zM998.0 187.1L1010.5 190.0v1.3L998.0 188.4zM986.0 193.8L996.0 190.9v1.3L986.0 195.2zM998.0 190.9L1010.5 193.8v1.3L998.0 192.2zM986.0 197.7L996.0 194.8v1.3L986.0 199.0zM998.0 194.8L1010.5 197.7v1.3L998.0 196.1zM986.0 201.6L996.0 198.7v1.3L986.0 202.9zM998.0 198.7L1010.5 201.6v1.3L998.0 200.0zM954.0 152.5L965.0 150.0v1.3L954.0 153.8zM954.0 156.4L965.0 153.9v1.3L954.0 157.7zM954.0 160.3L965.0 157.8v1.3L954.0 161.6zM954.0 164.2L965.0 161.7v1.3L954.0 165.5zM954.0 168.1L965.0 165.6v1.3L954.0 169.4zM954.0 172.0L965.0 169.5v1.3L954.0 173.3zM954.0 175.9L965.0 173.4v1.3L954.0 177.2zM954.0 179.8L965.0 177.3v1.3L954.0 181.1zM954.0 183.7L965.0 181.2v1.3L954.0 185.0zM954.0 187.6L965.0 185.1v1.3L954.0 188.9zM954.0 191.5L965.0 189.0v1.3L954.0 192.8zM954.0 195.4L965.0 192.9v1.3L954.0 196.7zM954.0 199.3L965.0 196.8v1.3L954.0 200.6z"/>
<path fill="#3a5f9a" opacity="0.13" d="M369.5 145.0L397.0 140.0L418.0 144.0V199H369.5z"/>
<path fill="#3a5f9a" opacity="0.08" d="M369.5 145.0L397.0 140.0V199H369.5z"/>
<path fill="#3a5f9a" opacity="0.45" d="M369.5 143.0l2.4 -0.1v3.0l-2.4 0.1zM373.9 142.8l2.4 -0.1v3.0l-2.4 0.1zM378.3 142.5l2.4 -0.1v3.0l-2.4 0.1zM382.8 142.2l2.4 -0.1v3.0l-2.4 0.1zM387.2 142.0l2.4 -0.1v3.0l-2.4 0.1zM391.6 141.8l2.4 -0.1v3.0l-2.4 0.1zM369.5 149.2l2.4 -0.1v3.0l-2.4 0.1zM373.9 148.9l2.4 -0.1v3.0l-2.4 0.1zM378.3 148.7l2.4 -0.1v3.0l-2.4 0.1zM382.8 148.4l2.4 -0.1v3.0l-2.4 0.1zM387.2 148.2l2.4 -0.1v3.0l-2.4 0.1zM391.6 147.9l2.4 -0.1v3.0l-2.4 0.1zM369.5 155.4l2.4 -0.1v3.0l-2.4 0.1zM373.9 155.1l2.4 -0.1v3.0l-2.4 0.1zM378.3 154.9l2.4 -0.1v3.0l-2.4 0.1zM382.8 154.6l2.4 -0.1v3.0l-2.4 0.1zM387.2 154.4l2.4 -0.1v3.0l-2.4 0.1zM391.6 154.1l2.4 -0.1v3.0l-2.4 0.1zM369.5 161.6l2.4 -0.1v3.0l-2.4 0.1zM373.9 161.3l2.4 -0.1v3.0l-2.4 0.1zM378.3 161.1l2.4 -0.1v3.0l-2.4 0.1zM382.8 160.8l2.4 -0.1v3.0l-2.4 0.1zM387.2 160.6l2.4 -0.1v3.0l-2.4 0.1zM391.6 160.3l2.4 -0.1v3.0l-2.4 0.1zM369.5 167.8l2.4 -0.1v3.0l-2.4 0.1zM373.9 167.5l2.4 -0.1v3.0l-2.4 0.1zM378.3 167.3l2.4 -0.1v3.0l-2.4 0.1zM382.8 167.0l2.4 -0.1v3.0l-2.4 0.1zM387.2 166.8l2.4 -0.1v3.0l-2.4 0.1zM391.6 166.5l2.4 -0.1v3.0l-2.4 0.1zM369.5 174.0l2.4 -0.1v3.0l-2.4 0.1zM373.9 173.7l2.4 -0.1v3.0l-2.4 0.1zM378.3 173.5l2.4 -0.1v3.0l-2.4 0.1zM382.8 173.2l2.4 -0.1v3.0l-2.4 0.1zM387.2 173.0l2.4 -0.1v3.0l-2.4 0.1zM391.6 172.7l2.4 -0.1v3.0l-2.4 0.1zM369.5 180.2l2.4 -0.1v3.0l-2.4 0.1zM373.9 179.9l2.4 -0.1v3.0l-2.4 0.1zM378.3 179.7l2.4 -0.1v3.0l-2.4 0.1zM382.8 179.4l2.4 -0.1v3.0l-2.4 0.1zM387.2 179.2l2.4 -0.1v3.0l-2.4 0.1zM391.6 178.9l2.4 -0.1v3.0l-2.4 0.1zM369.5 186.4l2.4 -0.1v3.0l-2.4 0.1zM373.9 186.1l2.4 -0.1v3.0l-2.4 0.1zM378.3 185.9l2.4 -0.1v3.0l-2.4 0.1zM382.8 185.6l2.4 -0.1v3.0l-2.4 0.1zM387.2 185.4l2.4 -0.1v3.0l-2.4 0.1zM391.6 185.1l2.4 -0.1v3.0l-2.4 0.1zM369.5 192.6l2.4 -0.1v3.0l-2.4 0.1zM373.9 192.3l2.4 -0.1v3.0l-2.4 0.1zM378.3 192.1l2.4 -0.1v3.0l-2.4 0.1zM382.8 191.8l2.4 -0.1v3.0l-2.4 0.1zM387.2 191.6l2.4 -0.1v3.0l-2.4 0.1zM391.6 191.3l2.4 -0.1v3.0l-2.4 0.1zM369.5 198.8l2.4 -0.1v3.0l-2.4 0.1zM373.9 198.5l2.4 -0.1v3.0l-2.4 0.1zM378.3 198.3l2.4 -0.1v3.0l-2.4 0.1zM382.8 198.0l2.4 -0.1v3.0l-2.4 0.1zM387.2 197.8l2.4 -0.1v3.0l-2.4 0.1zM391.6 197.5l2.4 -0.1v3.0l-2.4 0.1zM398.0 141.0l2.2 0.1v3.0l-2.2 -0.1zM402.0 141.2l2.2 0.1v3.0l-2.2 -0.1zM406.0 141.5l2.2 0.1v3.0l-2.2 -0.1zM410.0 141.8l2.2 0.1v3.0l-2.2 -0.1zM414.0 142.0l2.2 0.1v3.0l-2.2 -0.1zM398.0 147.2l2.2 0.1v3.0l-2.2 -0.1zM402.0 147.4l2.2 0.1v3.0l-2.2 -0.1zM406.0 147.7l2.2 0.1v3.0l-2.2 -0.1zM410.0 147.9l2.2 0.1v3.0l-2.2 -0.1zM414.0 148.2l2.2 0.1v3.0l-2.2 -0.1zM398.0 153.4l2.2 0.1v3.0l-2.2 -0.1zM402.0 153.6l2.2 0.1v3.0l-2.2 -0.1zM406.0 153.9l2.2 0.1v3.0l-2.2 -0.1zM410.0 154.1l2.2 0.1v3.0l-2.2 -0.1zM414.0 154.4l2.2 0.1v3.0l-2.2 -0.1zM398.0 159.6l2.2 0.1v3.0l-2.2 -0.1zM402.0 159.8l2.2 0.1v3.0l-2.2 -0.1zM406.0 160.1l2.2 0.1v3.0l-2.2 -0.1zM410.0 160.3l2.2 0.1v3.0l-2.2 -0.1zM414.0 160.6l2.2 0.1v3.0l-2.2 -0.1zM398.0 165.8l2.2 0.1v3.0l-2.2 -0.1zM402.0 166.0l2.2 0.1v3.0l-2.2 -0.1zM406.0 166.3l2.2 0.1v3.0l-2.2 -0.1zM410.0 166.5l2.2 0.1v3.0l-2.2 -0.1zM414.0 166.8l2.2 0.1v3.0l-2.2 -0.1zM398.0 172.0l2.2 0.1v3.0l-2.2 -0.1zM402.0 172.2l2.2 0.1v3.0l-2.2 -0.1zM406.0 172.5l2.2 0.1v3.0l-2.2 -0.1zM410.0 172.7l2.2 0.1v3.0l-2.2 -0.1zM414.0 173.0l2.2 0.1v3.0l-2.2 -0.1zM398.0 178.2l2.2 0.1v3.0l-2.2 -0.1zM402.0 178.4l2.2 0.1v3.0l-2.2 -0.1zM406.0 178.7l2.2 0.1v3.0l-2.2 -0.1zM410.0 178.9l2.2 0.1v3.0l-2.2 -0.1zM414.0 179.2l2.2 0.1v3.0l-2.2 -0.1zM398.0 184.4l2.2 0.1v3.0l-2.2 -0.1zM402.0 184.6l2.2 0.1v3.0l-2.2 -0.1zM406.0 184.9l2.2 0.1v3.0l-2.2 -0.1zM410.0 185.1l2.2 0.1v3.0l-2.2 -0.1zM414.0 185.4l2.2 0.1v3.0l-2.2 -0.1zM398.0 190.6l2.2 0.1v3.0l-2.2 -0.1zM402.0 190.8l2.2 0.1v3.0l-2.2 -0.1zM406.0 191.1l2.2 0.1v3.0l-2.2 -0.1zM410.0 191.3l2.2 0.1v3.0l-2.2 -0.1zM414.0 191.6l2.2 0.1v3.0l-2.2 -0.1zM398.0 196.8l2.2 0.1v3.0l-2.2 -0.1zM402.0 197.0l2.2 0.1v3.0l-2.2 -0.1zM406.0 197.3l2.2 0.1v3.0l-2.2 -0.1zM410.0 197.5l2.2 0.1v3.0l-2.2 -0.1zM414.0 197.8l2.2 0.1v3.0l-2.2 -0.1z"/>
<path fill="#b0302a" opacity="0.85" d="M383.0 139.5l1.6 -0.3v1.8l-1.6 0.3zM386.2 138.9l1.6 -0.3v1.8l-1.6 0.3zM389.5 138.3l1.6 -0.3v1.8l-1.6 0.3zM392.8 137.7l1.6 -0.3v1.8l-1.6 0.3zM383.0 143.0l1.6 -0.3v1.8l-1.6 0.3zM386.2 142.4l1.6 -0.3v1.8l-1.6 0.3zM389.5 141.8l1.6 -0.3v1.8l-1.6 0.3zM392.8 141.2l1.6 -0.3v1.8l-1.6 0.3zM398.0 139.5l1.8 0.5v1.8l-1.8 -0.5zM401.5 140.4l1.8 0.5v1.8l-1.8 -0.5zM405.0 141.3l1.8 0.5v1.8l-1.8 -0.5zM408.5 142.2l1.8 0.5v1.8l-1.8 -0.5zM398.0 143.0l1.8 0.5v1.8l-1.8 -0.5zM401.5 143.9l1.8 0.5v1.8l-1.8 -0.5zM405.0 144.8l1.8 0.5v1.8l-1.8 -0.5zM408.5 145.7l1.8 0.5v1.8l-1.8 -0.5z"/>
<path fill="#2c64a8" opacity="0.14" d="M516 146H550V199H516z"/>
<path fill="#c9a0a8" opacity="0.25" d="M516.5 133L536 131L549.5 133V146H516.5z"/>
<path fill="#b58a92" opacity="0.80" d="M515.5 130.5h20.5v0.8h-20.5zM515.5 132.0h20.5v0.8h-20.5zM536.0 130.5h14.0v0.8h-14.0zM536.0 132.0h14.0v0.8h-14.0z"/>
<path fill="#a8404a" opacity="0.75" d="M518.0 134.0l1.7 -0.1v2.2l-1.7 0.1zM521.0 133.8l1.7 -0.1v2.2l-1.7 0.1zM524.0 133.6l1.7 -0.1v2.2l-1.7 0.1zM527.0 133.4l1.7 -0.1v2.2l-1.7 0.1zM530.0 133.2l1.7 -0.1v2.2l-1.7 0.1zM533.0 133.0l1.7 -0.1v2.2l-1.7 0.1zM518.0 138.4l1.7 -0.1v2.2l-1.7 0.1zM521.0 138.2l1.7 -0.1v2.2l-1.7 0.1zM524.0 138.0l1.7 -0.1v2.2l-1.7 0.1zM527.0 137.8l1.7 -0.1v2.2l-1.7 0.1zM530.0 137.6l1.7 -0.1v2.2l-1.7 0.1zM533.0 137.4l1.7 -0.1v2.2l-1.7 0.1zM518.0 142.8l1.7 -0.1v2.2l-1.7 0.1zM521.0 142.6l1.7 -0.1v2.2l-1.7 0.1zM524.0 142.4l1.7 -0.1v2.2l-1.7 0.1zM527.0 142.2l1.7 -0.1v2.2l-1.7 0.1zM530.0 142.0l1.7 -0.1v2.2l-1.7 0.1zM533.0 141.8l1.7 -0.1v2.2l-1.7 0.1z"/>
<path fill="#b58a92" opacity="0.60" d="M539.0 133.0h0.8v66.0h-0.8zM541.5 133.0h0.8v66.0h-0.8zM544.0 133.0h0.8v66.0h-0.8zM546.5 133.0h0.8v66.0h-0.8z"/>
<path fill="#2c64a8" opacity="0.45" d="M518.0 147.0l1.7 0.0v2.6l-1.7 -0.0zM521.0 147.0l1.7 0.0v2.6l-1.7 -0.0zM524.0 147.0l1.7 0.0v2.6l-1.7 -0.0zM527.0 147.0l1.7 0.0v2.6l-1.7 -0.0zM530.0 147.0l1.7 0.0v2.6l-1.7 -0.0zM533.0 147.0l1.7 0.0v2.6l-1.7 -0.0zM518.0 152.2l1.7 0.0v2.6l-1.7 -0.0zM521.0 152.2l1.7 0.0v2.6l-1.7 -0.0zM524.0 152.2l1.7 0.0v2.6l-1.7 -0.0zM527.0 152.2l1.7 0.0v2.6l-1.7 -0.0zM530.0 152.2l1.7 0.0v2.6l-1.7 -0.0zM533.0 152.2l1.7 0.0v2.6l-1.7 -0.0zM518.0 157.4l1.7 0.0v2.6l-1.7 -0.0zM521.0 157.4l1.7 0.0v2.6l-1.7 -0.0zM524.0 157.4l1.7 0.0v2.6l-1.7 -0.0zM527.0 157.4l1.7 0.0v2.6l-1.7 -0.0zM530.0 157.4l1.7 0.0v2.6l-1.7 -0.0zM533.0 157.4l1.7 0.0v2.6l-1.7 -0.0zM518.0 162.6l1.7 0.0v2.6l-1.7 -0.0zM521.0 162.6l1.7 0.0v2.6l-1.7 -0.0zM524.0 162.6l1.7 0.0v2.6l-1.7 -0.0zM527.0 162.6l1.7 0.0v2.6l-1.7 -0.0zM530.0 162.6l1.7 0.0v2.6l-1.7 -0.0zM533.0 162.6l1.7 0.0v2.6l-1.7 -0.0zM518.0 167.8l1.7 0.0v2.6l-1.7 -0.0zM521.0 167.8l1.7 0.0v2.6l-1.7 -0.0zM524.0 167.8l1.7 0.0v2.6l-1.7 -0.0zM527.0 167.8l1.7 0.0v2.6l-1.7 -0.0zM530.0 167.8l1.7 0.0v2.6l-1.7 -0.0zM533.0 167.8l1.7 0.0v2.6l-1.7 -0.0zM518.0 173.0l1.7 0.0v2.6l-1.7 -0.0zM521.0 173.0l1.7 0.0v2.6l-1.7 -0.0zM524.0 173.0l1.7 0.0v2.6l-1.7 -0.0zM527.0 173.0l1.7 0.0v2.6l-1.7 -0.0zM530.0 173.0l1.7 0.0v2.6l-1.7 -0.0zM533.0 173.0l1.7 0.0v2.6l-1.7 -0.0zM518.0 178.2l1.7 0.0v2.6l-1.7 -0.0zM521.0 178.2l1.7 0.0v2.6l-1.7 -0.0zM524.0 178.2l1.7 0.0v2.6l-1.7 -0.0zM527.0 178.2l1.7 0.0v2.6l-1.7 -0.0zM530.0 178.2l1.7 0.0v2.6l-1.7 -0.0zM533.0 178.2l1.7 0.0v2.6l-1.7 -0.0zM518.0 183.4l1.7 0.0v2.6l-1.7 -0.0zM521.0 183.4l1.7 0.0v2.6l-1.7 -0.0zM524.0 183.4l1.7 0.0v2.6l-1.7 -0.0zM527.0 183.4l1.7 0.0v2.6l-1.7 -0.0zM530.0 183.4l1.7 0.0v2.6l-1.7 -0.0zM533.0 183.4l1.7 0.0v2.6l-1.7 -0.0zM518.0 188.6l1.7 0.0v2.6l-1.7 -0.0zM521.0 188.6l1.7 0.0v2.6l-1.7 -0.0zM524.0 188.6l1.7 0.0v2.6l-1.7 -0.0zM527.0 188.6l1.7 0.0v2.6l-1.7 -0.0zM530.0 188.6l1.7 0.0v2.6l-1.7 -0.0zM533.0 188.6l1.7 0.0v2.6l-1.7 -0.0zM518.0 193.8l1.7 0.0v2.6l-1.7 -0.0zM521.0 193.8l1.7 0.0v2.6l-1.7 -0.0zM524.0 193.8l1.7 0.0v2.6l-1.7 -0.0zM527.0 193.8l1.7 0.0v2.6l-1.7 -0.0zM530.0 193.8l1.7 0.0v2.6l-1.7 -0.0zM533.0 193.8l1.7 0.0v2.6l-1.7 -0.0zM518.0 199.0l1.7 0.0v2.6l-1.7 -0.0zM521.0 199.0l1.7 0.0v2.6l-1.7 -0.0zM524.0 199.0l1.7 0.0v2.6l-1.7 -0.0zM527.0 199.0l1.7 0.0v2.6l-1.7 -0.0zM530.0 199.0l1.7 0.0v2.6l-1.7 -0.0zM533.0 199.0l1.7 0.0v2.6l-1.7 -0.0zM425.0 179.0l2.0 -0.1v2.2l-2.0 0.1zM428.7 178.8l2.0 -0.1v2.2l-2.0 0.1zM432.3 178.5l2.0 -0.1v2.2l-2.0 0.1zM425.0 183.6l2.0 -0.1v2.2l-2.0 0.1zM428.7 183.3l2.0 -0.1v2.2l-2.0 0.1zM432.3 183.1l2.0 -0.1v2.2l-2.0 0.1zM425.0 188.2l2.0 -0.1v2.2l-2.0 0.1zM428.7 187.9l2.0 -0.1v2.2l-2.0 0.1zM432.3 187.7l2.0 -0.1v2.2l-2.0 0.1zM425.0 192.8l2.0 -0.1v2.2l-2.0 0.1zM428.7 192.5l2.0 -0.1v2.2l-2.0 0.1zM432.3 192.3l2.0 -0.1v2.2l-2.0 0.1zM425.0 197.4l2.0 -0.1v2.2l-2.0 0.1zM428.7 197.1l2.0 -0.1v2.2l-2.0 0.1zM432.3 196.9l2.0 -0.1v2.2l-2.0 0.1zM438.0 177.0l2.3 0.1v2.2l-2.3 -0.1zM442.2 177.2l2.3 0.1v2.2l-2.3 -0.1zM446.5 177.5l2.3 0.1v2.2l-2.3 -0.1zM450.8 177.8l2.3 0.1v2.2l-2.3 -0.1zM438.0 181.6l2.3 0.1v2.2l-2.3 -0.1zM442.2 181.8l2.3 0.1v2.2l-2.3 -0.1zM446.5 182.1l2.3 0.1v2.2l-2.3 -0.1zM450.8 182.3l2.3 0.1v2.2l-2.3 -0.1zM438.0 186.2l2.3 0.1v2.2l-2.3 -0.1zM442.2 186.4l2.3 0.1v2.2l-2.3 -0.1zM446.5 186.7l2.3 0.1v2.2l-2.3 -0.1zM450.8 186.9l2.3 0.1v2.2l-2.3 -0.1zM438.0 190.8l2.3 0.1v2.2l-2.3 -0.1zM442.2 191.0l2.3 0.1v2.2l-2.3 -0.1zM446.5 191.3l2.3 0.1v2.2l-2.3 -0.1zM450.8 191.5l2.3 0.1v2.2l-2.3 -0.1zM438.0 195.4l2.3 0.1v2.2l-2.3 -0.1zM442.2 195.6l2.3 0.1v2.2l-2.3 -0.1zM446.5 195.9l2.3 0.1v2.2l-2.3 -0.1zM450.8 196.1l2.3 0.1v2.2l-2.3 -0.1z"/>
</svg>
<!--SKYLINE-END-->
<div class="abs" id="nav">
<span style="left:85px">首页</span>
<span style="left:244px">政府信息公开</span>
<span style="left:457px">政务服务</span>
<span style="left:652px">互动交流</span>
<span style="left:847px">专题专栏</span>
<span style="left:1042px">数据服务</span>
</div>
<div class="abs" id="main"></div>
<div class="abs" id="crumb"><span style="left:0">当前位置<b style="font-weight:inherit;margin-left:1.5px">:</b></span><span style="left:95px">首页</span><span style="left:135.5px;font-size:15.5px">&gt;</span><span style="left:149px">政府信息公开</span><span style="left:261.5px;font-size:15.5px">&gt;</span><span style="left:275.5px">政策文件</span><span style="left:351.5px;font-size:15.5px">&gt;</span><span style="left:365.5px">其他文件</span></div>
<div class="abs" id="info"></div>
<div class="abs meta" style="left:20px;top:284px">索 引 号：<i>008283930/2023-00120</i></div>
<div class="abs meta" style="left:20px;top:308px">成文日期：<i>2023-09-08</i></div>
<div class="abs meta" style="left:20px;top:332px">有效性：有效</div>
<div class="abs meta" style="left:414px;top:284px">公文种类：通告</div>
<div class="abs meta" style="left:414px;top:308px">发布日期：<i>2023-09-08</i></div>
<div class="abs meta" style="left:807px;top:284px">发布机构：四川省住房和城乡建设厅</div>
<div class="abs meta" style="left:807px;top:308px">文号：川建通告〔<i>2023</i>〕<i>195</i>号</div>
<div class="abs" id="h1">四川省住房和城乡建设厅关于公布第一批四川省住房城乡建设领域科技成果库的通告</div>
<div class="abs meta" style="left:20px;top:464px">发布时间：<i>2023-09-08</i></div>
<div class="abs meta" style="left:217px;top:464px">来源：厅勘设科技处</div>
<div class="abs meta" style="left:512px;top:464px">浏览：<i>284</i>次</div>
<div class="abs meta" style="left:707.5px;top:464px;word-spacing:1.2px">【字体： 大 中 小】</div>
<svg class="abs" style="left:904px;top:466px" width="16" height="16" viewBox="904 466 16 16" fill="#fff" stroke="#333" stroke-width="1"><rect x="906.9" y="467.5" width="9.600" height="5"/><rect x="905.500" y="472" width="12.400" height="4.600" rx=".8"/><rect x="906.9" y="474.800" width="9.600" height="4.800"/></svg>
<div class="abs meta" style="left:923px;top:464.5px;color:#1b9de0">打印</div>
<div class="abs meta" style="left:1145px;top:464px;color:#1b8fd8">分享到:</div>
<div class="abs" id="hr"></div>
<div class="abs p" style="left:58px;top:530px">按照四川省住房和城乡建设厅《关于印发〈四川省住房城乡建设领域新技术推广应用管理办法（试行）〉的通知》（川建行规〔2022〕4号）和《关于建立四川省</div>
<div class="abs p" style="left:26px;top:562px">住房城乡建设领域科技成果库的通知》（川建勘设科函〔2023〕194号）相关要求，前期经过申报、评审、公示<b style="font-weight:inherit;letter-spacing:4px">,</b>共有108项成果入选第一批四川省住房城乡建设领域科</div>
<div class="abs p" style="left:26px;top:594px">技成果库（以下简称成果库），现予公布。成果库详细内容在四川省住房和城乡建设厅官方网站<b class="q">“</b>住房城乡建设领域科技成果库<b class="q">”</b>专栏进行发布。</div>
<div class="abs" id="bot">相关链接</div>
<div class="abs" id="win"><div class="abs" style="left:0;top:-.5px;width:1212px;height:1px">
<div class="abs" id="tb"></div>
<div class="abs" id="tb2"></div>
<!--ICO-START-->
<svg class="abs" id="icons" style="left:0;top:0" width="1212" height="42" viewBox="0 0 1212 42" fill="none" stroke="#454545" stroke-width="1.1" stroke-linecap="round" stroke-linejoin="round">
<!-- pin -->
<path d="M22.8 13.600h6.400M23.600 13.600v4.200c0 1.600 -2.800 3.400 -3.100 6.000h11c-.3 -2.600 -3.100 -4.400 -3.100 -6.000v-4.200M26 23.800v5.200"/>
<!-- arrows -->
<g stroke="#ababab"><path d="M72.800 21h12M78 15.800l-5.200 5.200l5.200 5.200"/><path d="M113.200 21h12M120 15.800l5.200 5.200l-5.200 5.200"/></g>
<!-- grid -->
<g stroke-width="1"><rect x="150.500" y="15.500" width="4.200" height="4.200"/><rect x="157" y="15.500" width="4.200" height="4.200"/><rect x="163.500" y="15.500" width="4.200" height="4.200"/><rect x="150.500" y="22.300" width="4.200" height="4.200"/><rect x="157" y="22.300" width="4.200" height="4.200"/><rect x="163.500" y="22.300" width="4.200" height="4.200"/></g>
<!-- zoom in/out -->
<circle cx="210.700" cy="20" r="5.300"/><path d="M214.600 23.900l4 4M208.200 20h5M210.700 17.500v5"/>
<circle cx="251" cy="20" r="5.300"/><path d="M254.900 23.900l4 4M248.500 20h5"/>
<!-- 1:1 -->
<rect x="283" y="13.500" width="18" height="14.500" rx="1.500"/>
<text x="292" y="23.600" font-family="Liberation Sans,sans-serif" font-size="7.500" font-weight="400" text-anchor="middle" fill="#454545" stroke="none">1:1</text>
<!-- rotate -->
<rect x="340.500" y="18.200" width="12.800" height="8.300" rx="1"/><path d="M337 18.500c.3 -3 2.500 -4.800 5.500 -4.800M340.200 11.800l2.400 1.900l-2.400 2"/>
<!-- edit -->
<path d="M385.500 13.600h-6.500a1.500 1.500 0 0 0 -1.500 1.500v11.400a1.500 1.500 0 0 0 1.500 1.500h11.400a1.500 1.500 0 0 0 1.500 -1.500v-7M392.300 13.200l-8.500 8.800"/>
<!-- translate -->
<rect x="437.500" y="13" width="9" height="9" rx="1"/><rect x="430" y="20" width="9" height="9" rx="1" fill="#ececec"/>
<text x="442" y="20.300" font-family="Liberation Sans,sans-serif" font-size="6.500" font-weight="700" text-anchor="middle" fill="#454545" stroke="none">A</text>
<text x="434.500" y="27.300" font-family="Liberation Sans,Noto Sans CJK SC,sans-serif" font-size="6.500" font-weight="700" text-anchor="middle" fill="#454545" stroke="none">文</text>
<!-- ocr -->
<path d="M470.500 16.500v-2a1 1 0 0 1 1 -1h2.500M482 13.500h2.500a1 1 0 0 1 1 1v2M485.500 24.500v2a1 1 0 0 1 -1 1h-2.500M474 27.500h-2.500a1 1 0 0 1 -1 -1v-2"/>
<text x="478" y="24" font-family="Liberation Sans,Noto Sans CJK SC,sans-serif" font-size="9" text-anchor="middle" fill="#454545" stroke="none">文</text>
<!-- save -->
<path d="M515 17.500h-2.500a1 1 0 0 0 -1 1v9a1 1 0 0 0 1 1h11a1 1 0 0 0 1 -1v-9a1 1 0 0 0 -1 -1h-2.500M518 13v10.500M515 20.800l3 3l3 -3"/>
<!-- dots -->
<g fill="#454545" stroke="none"><circle cx="1023" cy="20.700" r="1.250"/><circle cx="1029" cy="20.700" r="1.250"/><circle cx="1035" cy="20.700" r="1.250"/></g>
<!-- window controls -->
<g stroke="#333" stroke-width="1"><path d="M1092 20.500h10"/><rect x="1138.300" y="16.200" width="9.600" height="9.600" rx="1.500"/><path d="M1184.300 16.200l9.600 9.600M1193.900 16.200l-9.600 9.600"/></g>
</svg>
<div class="sep" style="left:52px"></div><div class="sep" style="left:185px"></div><div class="sep" style="left:318px"></div><div class="sep" style="left:411px"></div><div class="sep" style="left:1055px"></div>
<!--ICO-END-->
<div class="abs" id="sheet"></div>
<div class="abs" id="grayrow"></div>
<!-- light gridlines row1 -->
<div class="gl" style="left:1px;top:130px;width:1210px;height:1px"></div>
<div class="gl" style="left:320px;top:100px;width:1px;height:30px"></div>
<div class="gl" style="left:464px;top:100px;width:1px;height:30px"></div>
<div class="gl" style="left:700px;top:100px;width:1px;height:30px"></div>
<div class="gl" style="left:905px;top:100px;width:1px;height:30px"></div>
<div class="abs" style="left:4.5px;top:105px;font-size:21.5px;line-height:24px;color:#111;font-family:'Liberation Sans','Noto Sans CJK SC',sans-serif;white-space:nowrap">附件</div>
<div class="big" style="top:140px">第一批入选四川省住房城乡建设领域</div>
<div class="big" style="top:183.5px">科技成果库名单</div>
<!-- header borders -->
<div class="dl" style="left:1px;top:229px;width:1210px;height:1px"></div>
<div class="gl" style="left:1px;top:252px;width:1210px;height:2px;background:#cdcdcd"></div>
<div class="dl" style="left:45px;top:229px;width:1px;height:72px"></div>
<div class="dl" style="left:320px;top:229px;width:1px;height:72px"></div>
<div class="dl" style="left:464px;top:229px;width:1px;height:72px"></div>
<div class="dl" style="left:700px;top:229px;width:1px;height:72px"></div>
<div class="dl" style="left:905px;top:229px;width:1px;height:72px"></div>
<div class="hd" style="left:2px;width:30px;text-align:left;font-size:20px;letter-spacing:0">序-</div>
<div class="hd" style="left:46px;width:274px">成果名称</div>
<div class="hd" style="left:321px;width:143px;padding-right:7px">成果类别</div>
<div class="hd" style="left:465px;width:235px">应用场景</div>
<div class="hd" style="left:701px;width:204px">入库情形</div>
<div class="hd" style="left:906px;width:304px">申报单位</div>
<div class="fb" style="left:27px;width:17px"></div>
<div class="fb" style="left:301px"></div>
<div class="fb" style="left:445px"></div>
<div class="fb" style="left:681px"></div>
<div class="fb" style="left:886px"></div>
<div class="fb" style="left:1192px"></div>
<div class="dt" style="left:1px;top:266px;width:44px;letter-spacing:0"><b class="mo">56</b></div>
<div class="dt" style="left:46px;top:256px;width:274px;line-height:21.5px">建筑楼地面保温隔声系统用<b class="mo">MFP</b>无<br>机硅声能凝胶</div>
<div class="dt" style="left:321px;top:266px;width:143px">应用技术成果</div>
<div class="dt" style="left:465px;top:266px;width:235px">绿色低碳循环技术发展</div>
<div class="dt" style="left:701px;top:266px;width:204px">绿色建材三星级标识</div>
<div class="dt" style="left:906px;top:266px;width:304px;padding-left:3px;letter-spacing:.8px">四川赛尔科美新材料科技有限公司</div>
<!-- selection borders -->
<div class="abs" style="left:0;top:100px;width:1212px;height:1px;background:#3a5aa8"></div>
<div class="abs" style="left:0;top:99px;width:1212px;height:1px;background:#1c8a5f"></div>
<div class="abs" style="left:0;top:100px;width:1px;height:198px;background:#24469c"></div>
<div class="abs" style="left:1210px;top:100px;width:2px;height:198px;background:#1a44a0"></div>
<div class="abs" style="left:0;top:295px;width:1212px;height:3px;background:#1f9d63"></div>
<div class="abs" style="left:1px;top:294px;width:5px;height:5px;background:#1f9d63"></div>
</div></div>
</body>
</html>
